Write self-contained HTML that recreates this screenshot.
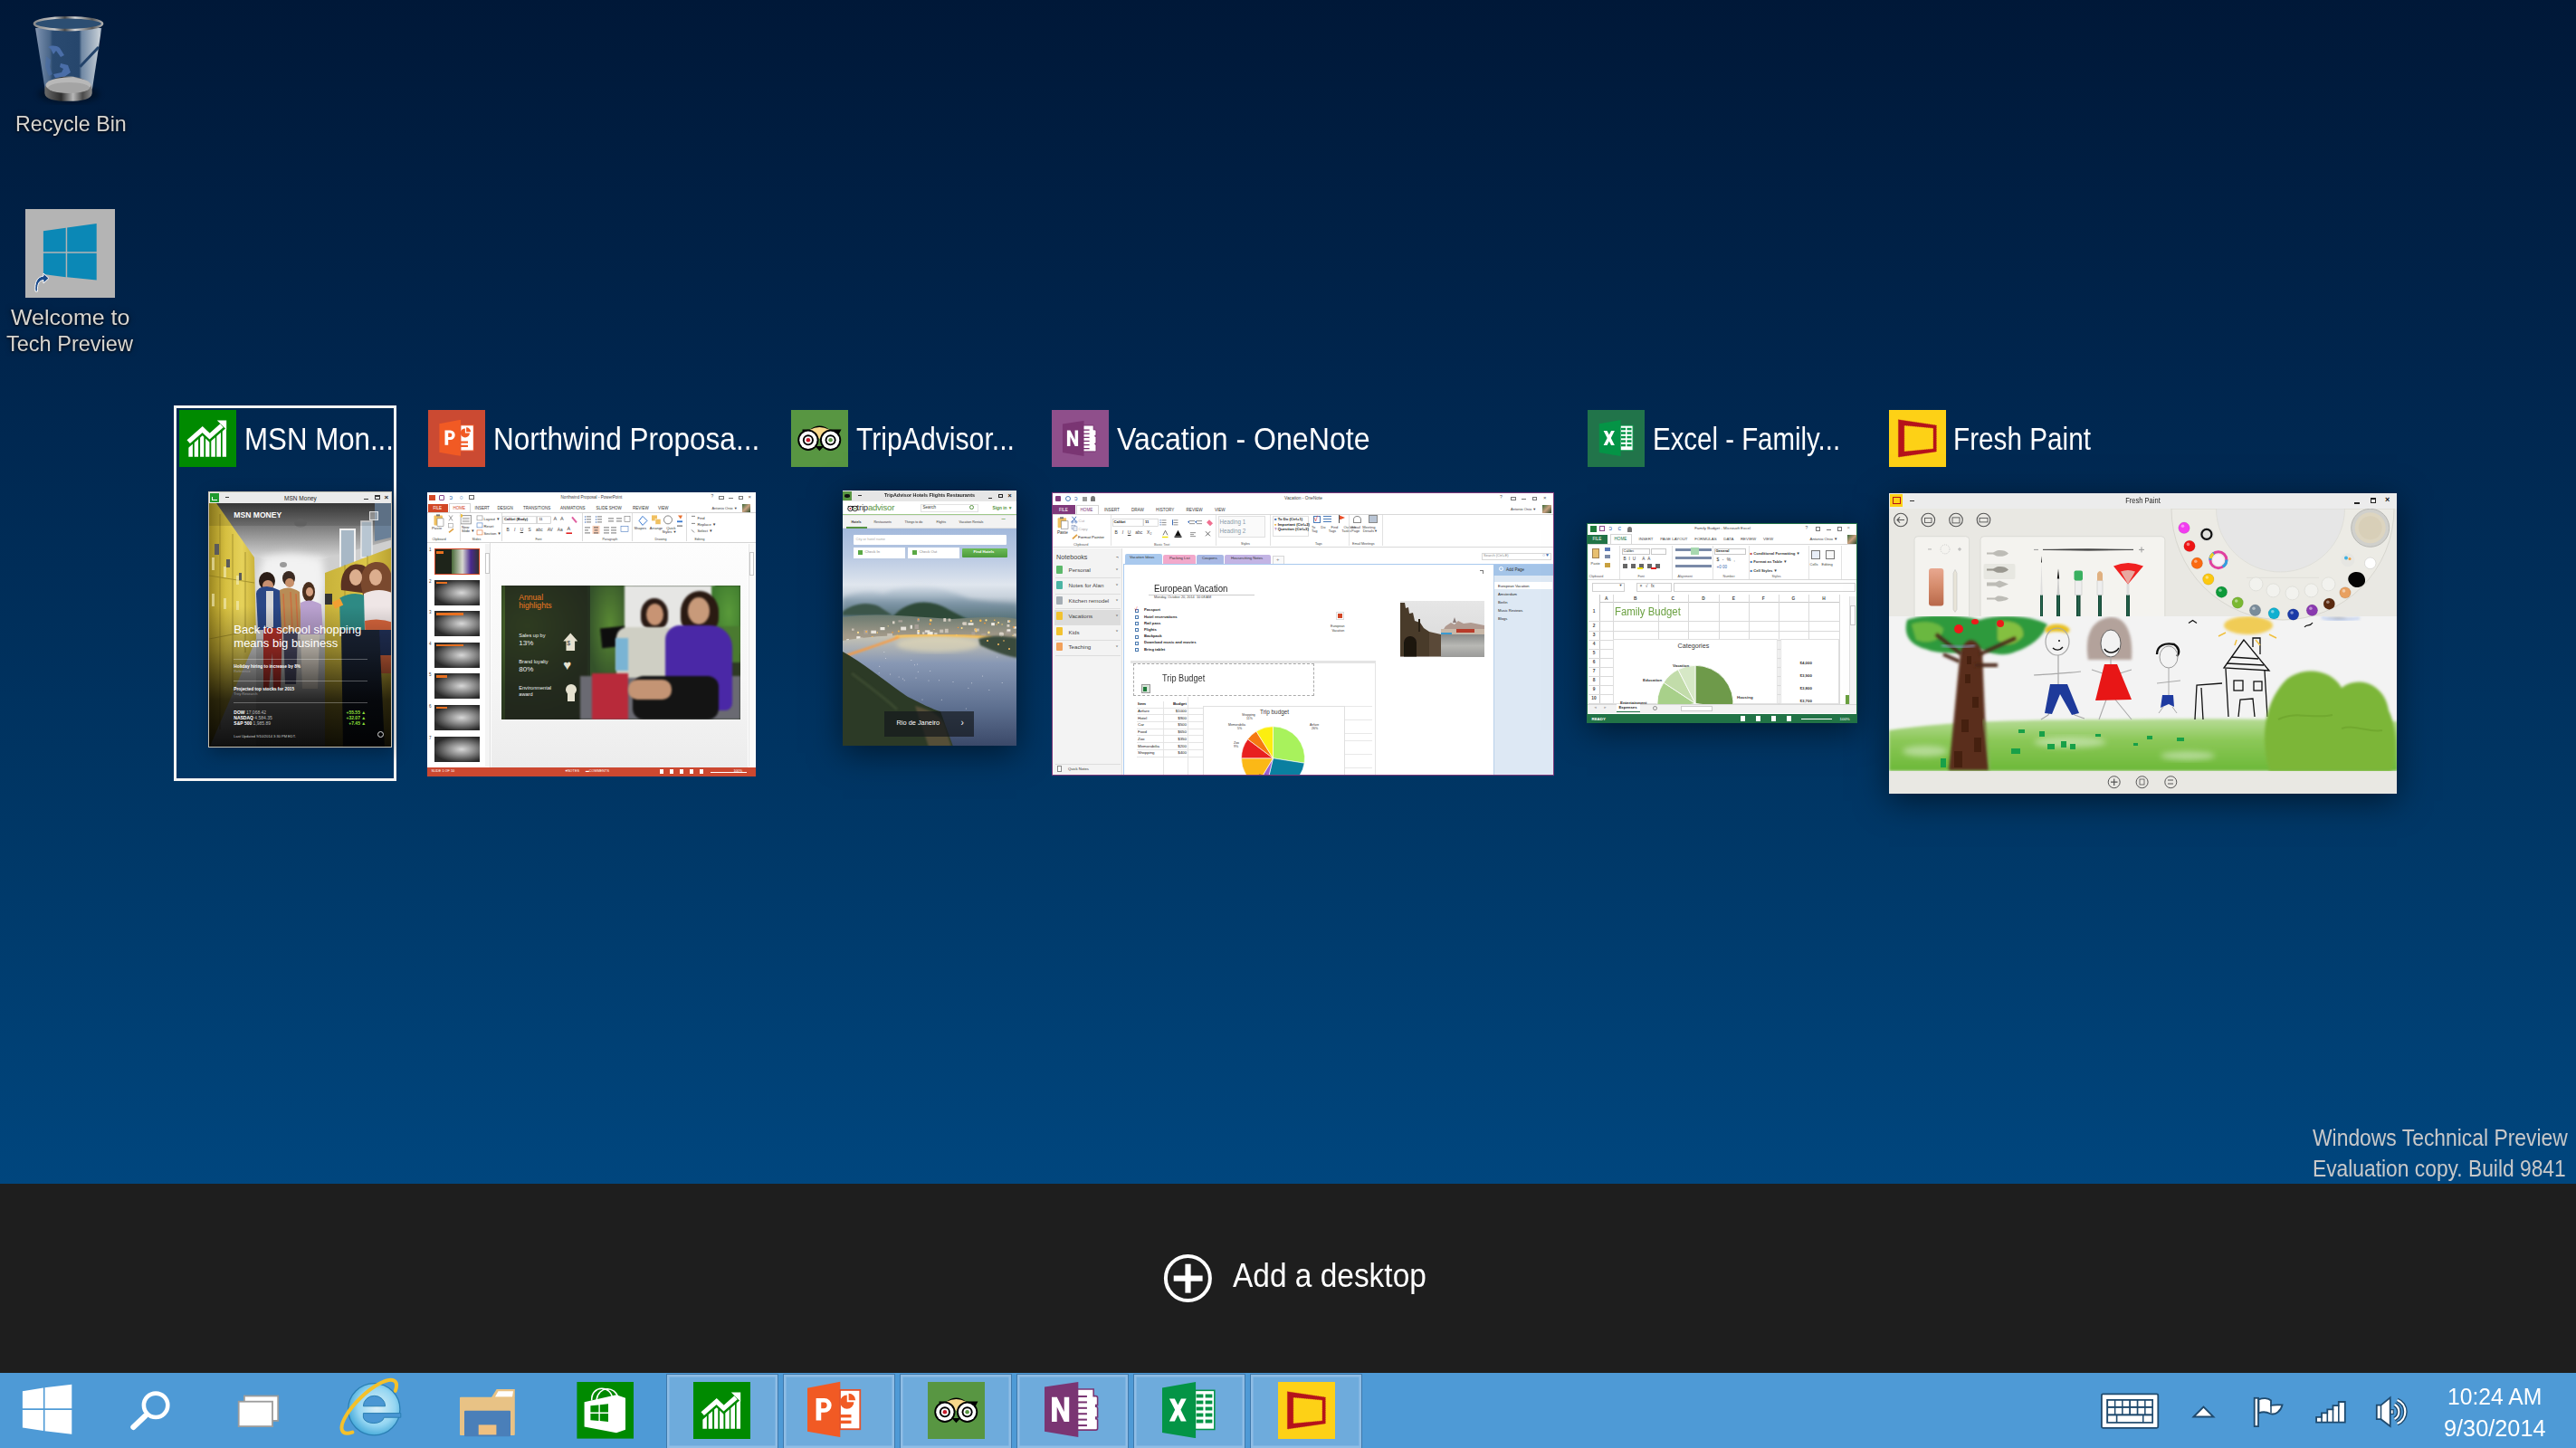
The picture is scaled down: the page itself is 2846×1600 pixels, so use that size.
<!DOCTYPE html>
<html><head><meta charset="utf-8">
<style>
*{margin:0;padding:0;box-sizing:border-box}
html,body{width:2846px;height:1600px;overflow:hidden;background:#000}
body{font-family:"Liberation Sans",sans-serif;position:relative}
.abs{position:absolute}
#bg{left:0;top:0;width:2846px;height:1308px;background:linear-gradient(180deg,#001838 0px,#00254d 400px,#003766 910px,#00467e 1308px)}
#dark{left:0;top:1308px;width:2846px;height:209px;background:#1e1e1e}
#tb{left:0;top:1517px;width:2846px;height:83px;background:#4e9ad6}
.lbl{color:#d8d5d0;font-size:24px;line-height:1;white-space:nowrap;transform-origin:0 0;text-shadow:0 1px 3px rgba(0,0,0,.8),0 0 6px rgba(0,0,0,.5)}
.hdr{color:#fff;font-size:35px;white-space:nowrap;line-height:1;transform-origin:0 0}
.ico{width:63px;height:63px}
.th{background:#fff}
.shd{box-shadow:0 8px 34px rgba(0,0,0,.5)}
.tt{white-space:nowrap;line-height:1.15}
.blur1{filter:blur(1.2px)}
.blur2{filter:blur(4px)}
.wm{color:#c9c9c9;font-size:25px;white-space:nowrap;line-height:1;transform-origin:0 0}
.clk{color:#fff;font-size:26px;white-space:nowrap;line-height:1;transform-origin:0 0}
.tbtn{top:1517.5px;width:124px;height:83px;background:#6eabdc;border:1.5px solid #3f79ac;box-shadow:inset 0 0 0 2.5px #8fbde5}
</style></head><body>
<div id="bg" class="abs"></div>

<!-- desktop icons -->
<div class="abs lbl" style="left:16.5px;top:125.4px;transform:scaleX(0.969)">Recycle Bin</div>
<svg class="abs" style="left:20px;top:10px" width="110" height="115" viewBox="20 10 110 115">
 <defs>
  <linearGradient id="rbBody" x1="0" y1="0" x2="1" y2="0"><stop offset="0" stop-color="#8898b0"/><stop offset=".08" stop-color="#6a82a2"/><stop offset=".22" stop-color="#4a6688"/><stop offset=".26" stop-color="#2a4a70"/><stop offset=".66" stop-color="#26466c"/><stop offset=".7" stop-color="#7088a4"/><stop offset=".92" stop-color="#b4c0cc"/><stop offset=".97" stop-color="#c8d0d8"/><stop offset="1" stop-color="#6a7e96"/></linearGradient>
  <linearGradient id="rbRim" x1="0" y1="0" x2="1" y2="0"><stop offset="0" stop-color="#8a8a8a"/><stop offset=".3" stop-color="#c8c8c8"/><stop offset=".45" stop-color="#4a4a4a"/><stop offset=".6" stop-color="#d8d8d8"/><stop offset=".85" stop-color="#5a5a5a"/><stop offset="1" stop-color="#b0b0b0"/></linearGradient>
  <linearGradient id="rbBase" x1="0" y1="0" x2="1" y2="0"><stop offset="0" stop-color="#6a6a6a"/><stop offset=".35" stop-color="#2e2e2e"/><stop offset=".6" stop-color="#b8b8b8"/><stop offset=".8" stop-color="#4a4a4a"/><stop offset="1" stop-color="#8a8a8a"/></linearGradient>
  <filter id="rbsh"><feGaussianBlur stdDeviation="3"/></filter>
 </defs>
 <ellipse cx="76" cy="104" rx="34" ry="10" fill="#000" opacity=".35" filter="url(#rbsh)"/>
 <path d="M39 31 L49.6 98 C58 104 94 104 102 98 L112.3 31 Z" fill="url(#rbBody)"/>
 <path d="M88.4 73.8 L109 52" stroke="#22426a" stroke-width="3"/>
 <g fill="#4a6ea8"><path d="M53 52 C57 50 62 50 66 53 L71 61 L67 63 L62 56 L59 60 L56 54 Z"/><path d="M67 70 L75 72 L78 80 L71 85 L61 86 L59 82 L68 80 L70 76 L66 74 Z"/><path d="M51 62 L56 66 L55 74 L58 82 L54 84 L50 74 Z" opacity=".6"/></g>
 <path d="M49.3 98 C50 91 60 84.5 75.5 84.5 C91 84.5 101 91 101.7 98 L101.7 103 C101 110 91 111.8 75.5 111.8 C60 111.8 50 110 49.3 103 Z" fill="url(#rbBase)"/>
 <ellipse cx="75.5" cy="94" rx="25" ry="8.5" fill="#b8b8b8"/>
 <ellipse cx="76" cy="97" rx="23" ry="6" fill="#a4a4a4"/>
 <ellipse cx="75.5" cy="26.2" rx="37.2" ry="6.6" fill="#2c4e72"/>
 <ellipse cx="75.5" cy="26.2" rx="37.6" ry="6.9" fill="none" stroke="url(#rbRim)" stroke-width="2.6"/>
</svg>
<div class="abs" style="left:28px;top:231px;width:99px;height:98px;background:#b4b4b4"></div>
<svg class="abs" style="left:28px;top:231px" width="99" height="98" viewBox="28 231 99 98">
 <path fill="#0b88b6" d="M47.9 255.3 L72.7 251.8 V278.3 H47.9 Z M74.2 251.6 L106.7 247 V278.3 H74.2 Z M47.9 279.8 H72.7 V306.2 L47.9 303 Z M74.2 279.8 H106.7 V309.5 L74.2 306.3 Z"/>
 <rect x="36" y="299" width="18" height="26" fill="#b4b4b4"/>
 <path d="M47.9 299 V303 L54 303.8 V299 Z" fill="#0b88b6"/>
 <path d="M39 322 C38 312 41 306 48 305 V302 L54 307.5 L48 313 V309.5 C43 310 41 314 41.5 322 Z" fill="#1a4a8a" stroke="#fff" stroke-width="1"/>
</svg>
<div class="abs lbl" style="left:11.8px;top:338.6px;transform:scaleX(1.04)">Welcome to</div><div class="abs lbl" style="left:7.1px;top:368.4px;transform:scaleX(0.98)">Tech Preview</div>

<!-- selection frame -->
<div class="abs" style="left:192px;top:448px;width:246px;height:415px;border:3px solid #f4f4f4"></div>

<!-- headers -->
<svg width="0" height="0" style="position:absolute">
<defs>
<symbol id="i-msn" viewBox="0 0 63 63"><rect width="63" height="63" fill="#008a00"/>
<polyline points="10.2,35.1 25.7,21.6 33.6,29.1 47,17.3" fill="none" stroke="#fff" stroke-width="5.2" stroke-linejoin="miter"/>
<polygon points="41.8,11.4 52.2,11.4 52.2,21.8" fill="#fff"/>
<clipPath id="cb"><polygon points="10.2,41.8 25.7,28.3 33.6,35.8 52.2,19.5 52.2,51.7 10.2,51.7"/></clipPath>
<g clip-path="url(#cb)" fill="#fff"><rect x="10.2" y="10" width="4.7" height="42"/><rect x="16.7" y="10" width="4.4" height="42"/><rect x="23.1" y="10" width="4.2" height="42"/><rect x="29.1" y="10" width="4.3" height="42"/><rect x="35.3" y="10" width="4.5" height="42"/><rect x="41.3" y="10" width="4.7" height="42"/><rect x="47.7" y="10" width="4.5" height="42"/></g>
</symbol>
<symbol id="d-ppt" viewBox="0 0 40 40"><polygon points="0,4.6 23.8,0 23.8,40.2 0,36" fill="#f15a24"/>
<rect x="23.6" y="6" width="14.6" height="28.4" fill="#fff" stroke="#e5532b" stroke-width="1.2"/>
<path d="M28.7 9.7 A5 5 0 1 0 33.7 14.7 L28.7 14.7 Z" fill="#f15a24"/><path d="M29.9 8.5 A5 5 0 0 1 34.9 13.5 L29.9 13.5 Z" fill="#f15a24"/>
<rect x="23.4" y="23.8" width="8.4" height="2.2" fill="#f15a24"/><rect x="23.4" y="28.1" width="8.4" height="2.2" fill="#f15a24"/>
<path fill-rule="evenodd" fill="#fff" d="M6.3 28 V11.9 H12.3 A5.2 5.2 0 0 1 12.3 22.3 H10 V28 Z M10 14.9 V19.3 H12 A2.2 2.2 0 0 0 12 14.9 Z"/></symbol>
<symbol id="i-ppt" viewBox="0 0 63 63"><rect width="63" height="63" fill="#cb4a32"/><use href="#d-ppt" x="12.2" y="10.7" width="40" height="40"/></symbol>
<symbol id="i-ta" viewBox="0 0 63 63"><rect width="63" height="63" fill="#589642"/>
<path d="M12.5 21.6 L21 21.6 Q31.5 13.2 42 21.6 L55.5 21.6 L50.5 31 L13 31 Z" fill="#000"/>
<path d="M20.8 21.8 Q31.5 16 42.2 21.8 L31.4 32 Z" fill="#f8d88b"/>
<polygon points="26.5,40 36.3,40 31.4,45.2" fill="#000"/>
<g><circle cx="18.9" cy="33.3" r="11.6" fill="#000"/><circle cx="18.9" cy="33.3" r="9.7" fill="#fff"/><circle cx="18.9" cy="33.3" r="6" fill="#000"/><circle cx="18.9" cy="33.3" r="4.1" fill="#fff"/><circle cx="18.9" cy="33.3" r="2.3" fill="#c51a2b"/></g>
<g><circle cx="43.6" cy="33.3" r="11.6" fill="#000"/><circle cx="43.6" cy="33.3" r="9.7" fill="#fff"/><circle cx="43.6" cy="33.3" r="6" fill="#000"/><circle cx="43.6" cy="33.3" r="4.1" fill="#fff"/><circle cx="43.6" cy="33.3" r="2.3" fill="#589642"/></g>
</symbol>
<symbol id="d-on" viewBox="0 0 40 40"><polygon points="0,3.5 23.7,0 23.7,39.1 0,35" fill="#7a3573"/>
<path d="M23.2 5.1 H34.4 V10 H36 A1.2 1.2 0 0 1 37.2 11.2 V16.4 H36 V17.4 A1.2 1.2 0 0 1 37.2 18.6 V25 H36 V26 A1.2 1.2 0 0 1 37.2 27.2 V32.8 A1.2 1.2 0 0 1 36 34 H23.2 Z" fill="#fff" stroke="#7a3573" stroke-width="1"/>
<g fill="#7a3573"><rect x="23" y="9.6" width="6.8" height="1.3"/><rect x="23" y="13.7" width="6.8" height="1.3"/><rect x="23" y="17.8" width="6.8" height="1.3"/><rect x="23" y="21.9" width="6.8" height="1.3"/><rect x="23" y="26" width="6.8" height="1.3"/><rect x="23" y="30.1" width="6.8" height="1.3"/></g>
<path d="M5.1 28.1 V10.7 H8.7 L13.8 21.1 V10.7 H17.3 V28.1 H13.8 L8.7 17.6 V28.1 Z" fill="#fff"/></symbol>
<symbol id="i-on" viewBox="0 0 63 63"><rect width="63" height="63" fill="#8f4f8b"/><use href="#d-on" x="11.8" y="11.9" width="40" height="40"/></symbol>
<symbol id="d-xl" viewBox="0 0 40 40"><polygon points="0,4.1 24.1,0 24.1,39.9 0,36" fill="#049446"/>
<rect x="23.7" y="6" width="13.9" height="27.7" fill="#fff" stroke="#049446" stroke-width="1"/>
<g fill="#049446"><rect x="24.5" y="8.7" width="5" height="2.5"/><rect x="31" y="8.7" width="5" height="2.5"/><rect x="24.5" y="13.2" width="5" height="2.5"/><rect x="31" y="13.2" width="5" height="2.5"/><rect x="24.5" y="17.7" width="5" height="2.5"/><rect x="31" y="17.7" width="5" height="2.5"/><rect x="24.5" y="22.2" width="5" height="2.5"/><rect x="31" y="22.2" width="5" height="2.5"/><rect x="24.5" y="26.7" width="5" height="2.5"/><rect x="31" y="26.7" width="5" height="2.5"/></g>
<path d="M5.1 11.8 H9 L11.3 16.4 L13.6 11.8 H17.4 L13.3 19.8 L17.4 27.9 H13.5 L11.3 23.3 L9 27.9 H5.1 L9.2 19.8 Z" fill="#fff"/></symbol>
<symbol id="i-xl" viewBox="0 0 63 63"><rect width="63" height="63" fill="#21744a"/><use href="#d-xl" x="12.5" y="11.1" width="40" height="40"/></symbol>
<symbol id="i-fp" viewBox="0 0 63 63"><rect width="63" height="63" fill="#fdd116"/>
<path fill-rule="evenodd" fill="#b5121b" stroke="#b5121b" stroke-width="0.6" stroke-dasharray="1.2 0.8" d="M10.4 10.8 L52.3 17 L52.3 45.9 L10.4 52 Z M16.8 17 L49 20 L49 43 L16.8 46.1 Z"/></symbol>
</defs></svg>
<svg class="abs" style="left:198px;top:453px" width="63" height="63"><use href="#i-msn"/></svg>
<div class="abs hdr" id="h1" style="left:269.9px;top:467.4px;transform:scaleX(0.893)">MSN Mon...</div>
<svg class="abs" style="left:473px;top:453px" width="63" height="63"><use href="#i-ppt"/></svg>
<div class="abs hdr" id="h2" style="left:545px;top:467.4px;transform:scaleX(0.900)">Northwind Proposa...</div>
<svg class="abs" style="left:874px;top:453px" width="63" height="63"><use href="#i-ta"/></svg>
<div class="abs hdr" id="h3" style="left:946.1px;top:467.4px;transform:scaleX(0.862)">TripAdvisor...</div>
<svg class="abs" style="left:1162px;top:453px" width="63" height="63"><use href="#i-on"/></svg>
<div class="abs hdr" id="h4" style="left:1234.4px;top:467.4px;transform:scaleX(0.917)">Vacation - OneNote</div>
<svg class="abs" style="left:1754px;top:453px" width="63" height="63"><use href="#i-xl"/></svg>
<div class="abs hdr" id="h5" style="left:1826.2px;top:467.4px;transform:scaleX(0.841)">Excel - Family...</div>
<svg class="abs" style="left:2087px;top:453px" width="63" height="63"><use href="#i-fp"/></svg>
<div class="abs hdr" id="h6" style="left:2158px;top:467.4px;transform:scaleX(0.849)">Fresh Paint</div>

<!-- thumbnails -->
<!-- MSN thumb -->
<div class="abs th" style="left:229.5px;top:543px;width:203.2px;height:283px;overflow:hidden;background:#eaeaea;border:1px solid #c8c0b0;box-shadow:2px 6px 18px rgba(0,0,0,.3)">
 <div class="abs" style="left:1.5px;top:0.8px;width:10px;height:10px;background:#1f9a2e"></div>
 <div class="abs" style="left:3.5px;top:5px;width:6px;height:4px;border-left:1px solid #fff;border-bottom:1px solid #fff"></div>
 <div class="abs" style="left:18px;top:5px;width:4px;height:1.3px;background:#333"></div>
 <div class="abs tt" style="left:0;width:203px;top:2.5px;text-align:center;font-size:6.5px;color:#222">MSN Money</div>
 <div class="abs" style="left:171px;top:7px;width:5px;height:1.3px;background:#333"></div>
 <div class="abs" style="left:183px;top:3px;width:6px;height:5px;border:1px solid #333;border-top-width:2px"></div>
 <div class="abs tt" style="left:194px;top:1px;font-size:8px;color:#222;font-weight:bold">×</div>
 <div class="abs" style="left:0;top:12px;width:203.2px;height:271px;overflow:hidden;background:#d8d8d8">
  <svg class="abs" style="left:0;top:0" width="204" height="271" viewBox="0 0 204 271">
   <defs>
    <linearGradient id="mceil" x1="0" y1="0" x2="0" y2="1"><stop offset="0" stop-color="#3e3e3e"/><stop offset=".5" stop-color="#8a8a8a"/><stop offset="1" stop-color="#d8d8d8"/></linearGradient>
    <radialGradient id="mlight" cx=".5" cy=".5" r=".5"><stop offset="0" stop-color="#ffffff"/><stop offset=".6" stop-color="#f4f4f4"/><stop offset="1" stop-color="#e0e0e0" stop-opacity="0"/></radialGradient>
    <linearGradient id="mlock" x1="0" y1="0" x2="1" y2="0"><stop offset="0" stop-color="#9a8620"/><stop offset=".35" stop-color="#d6bf40"/><stop offset=".7" stop-color="#e6d25a"/><stop offset="1" stop-color="#c8b038"/></linearGradient>
    <linearGradient id="mlockr" x1="0" y1="0" x2="1" y2="0"><stop offset="0" stop-color="#c8b23a"/><stop offset=".6" stop-color="#dcc648"/><stop offset="1" stop-color="#b8a030"/></linearGradient>
    <linearGradient id="mdark" x1="0" y1="0" x2="0" y2="1"><stop offset="0" stop-color="#000" stop-opacity="0"/><stop offset=".42" stop-color="#000" stop-opacity="0"/><stop offset=".6" stop-color="#000" stop-opacity=".3"/><stop offset=".8" stop-color="#000" stop-opacity=".78"/><stop offset="1" stop-color="#000" stop-opacity=".93"/></linearGradient>
    <filter id="mb1"><feGaussianBlur stdDeviation=".7"/></filter><filter id="mb3"><feGaussianBlur stdDeviation="4"/></filter>
   </defs>
   <rect x="0" y="0" width="204" height="271" fill="#cfcfcf"/>
   <path d="M0 0 H204 V40 L125 62 H60 L0 30 Z" fill="url(#mceil)"/>
   <ellipse cx="90" cy="85" rx="45" ry="35" fill="url(#mlight)" filter="url(#mb3)"/>
   <rect x="60" y="60" width="65" height="70" fill="#f2f2f2" filter="url(#mb3)"/>
   <ellipse cx="101" cy="22" rx="7" ry="4.5" fill="#6e6e6e"/>
   <ellipse cx="82" cy="68" rx="4" ry="3" fill="#9a9a9a"/>
   <path d="M0 0 H8 L50 60 L52 150 L0 271 Z" fill="url(#mlock)"/>
   <g stroke="#7a6a18" stroke-width="1" opacity=".55"><path d="M12 12 V250 M26 34 V205 M40 54 V165"/><path d="M0 80 L50 88 M0 150 L52 140"/></g>
   <g fill="#f6f0c0" opacity=".6"><rect x="3" y="60" width="3" height="14"/><rect x="16" y="70" width="3" height="12"/><rect x="30" y="80" width="3" height="10"/><rect x="3" y="100" width="3" height="14"/><rect x="16" y="105" width="3" height="12"/><rect x="30" y="108" width="3" height="10"/></g>
   <g fill="#5a5a5a"><rect x="6" y="45" width="5" height="12"/><rect x="19" y="62" width="4" height="9"/><rect x="33" y="77" width="3" height="8"/></g>
   <rect x="145" y="29" width="16" height="51" fill="#a8b8c6" stroke="#f0f0f0" stroke-width="2"/>
   <rect x="168" y="20" width="12" height="40" fill="#b8c6d2" stroke="#eaeaea" stroke-width="1.5"/>
   <path d="M183 0 H204 V37 L183 42 Z" fill="#6a8098"/>
   <path d="M128 77 L204 48 V271 H128 Z" fill="url(#mlockr)"/>
   <g stroke="#7a6a18" stroke-width="1" opacity=".5"><path d="M150 68 V230 M175 58 V240"/></g>
   <rect x="128" y="100" width="8" height="12" fill="#333"/>
   <path d="M52 150 L128 150 L128 271 L52 271 Z" fill="#b8b8b8"/>
   <g filter="url(#mb1)">
    <ellipse cx="64" cy="86" rx="9" ry="10" fill="#2a1c14"/>
    <ellipse cx="65" cy="91" rx="6" ry="6" fill="#c89070"/>
    <path d="M52 100 Q53 92 64 92 Q78 93 84 104 L86 140 H54 Z" fill="#2c4686"/>
    <rect x="63" y="97" width="8" height="40" fill="#d8d8d8"/>
    <path d="M60 138 H81 L79 205 H71 L70 165 L66 205 H60 Z" fill="#b8302a"/>
    <ellipse cx="88" cy="83" rx="7" ry="8" fill="#3a2a20"/>
    <ellipse cx="89" cy="88" rx="5" ry="5" fill="#c8906a"/>
    <path d="M78 96 Q88 90 100 98 L102 142 H80 Z" fill="#b88c56"/>
    <path d="M82 100 L84 140 M90 98 L92 140 M96 100 L98 140" stroke="#d85a30" stroke-width="1.5" opacity=".6"/>
    <path d="M82 142 H98 L96 200 H84 Z" fill="#4a4a62"/>
    <ellipse cx="110" cy="98" rx="7" ry="11" fill="#4a2e1e"/>
    <ellipse cx="111" cy="98" rx="4" ry="5" fill="#d4a080"/>
    <path d="M101 110 Q111 104 124 112 L126 145 H101 Z" fill="#baa2d0"/>
    <path d="M101 145 H122 L120 205 H103 Z" fill="#e4dcd0"/>
    <path d="M146 96 C144 75 155 65 168 68 C178 70 180 85 176 100 Z" fill="#5a3220"/>
    <path d="M168 92 C166 70 178 62 192 66 C204 72 204 90 200 110 H172 Z" fill="#7a4a2e"/>
    <ellipse cx="162" cy="82" rx="7" ry="9" fill="#dcae8e"/>
    <ellipse cx="184" cy="82" rx="7" ry="9" fill="#dcae8e"/>
    <path d="M144 105 Q158 97 172 102 L174 142 H145 Z" fill="#2e8a84"/>
    <path d="M171 100 Q188 92 204 100 V140 H172 Z" fill="#efe6e6"/>
    <rect x="137" y="107" width="10" height="8" fill="#f2a030" transform="rotate(-25 142 111)"/>
    <path d="M172 130 Q188 126 204 132 V188 H174 Z" fill="#d9663e"/>
    <path d="M177 140 H202 V168 H178 Z" fill="#23305a"/>
    <path d="M146 140 H188 L194 271 H148 Z" fill="#1d2638"/>
   </g>
   <rect x="0" y="0" width="204" height="271" fill="url(#mdark)"/>
   <rect x="0" y="0" width="204" height="25" fill="#000" opacity=".12"/>
  </svg>
  <!-- text -->
  <div class="abs tt" style="left:27.8px;top:9px;font-size:8.6px;font-weight:bold;color:#fff">MSN MONEY</div>
  <div class="abs" style="left:177px;top:8.5px;width:10px;height:10px;background:rgba(255,255,255,.35);border:1px solid rgba(255,255,255,.7)"></div>
  <div class="abs tt" style="left:27.8px;top:131.5px;font-size:13px;color:#fff;line-height:15px;transform-origin:0 0">Back to school shopping<br>means big business</div>
  <div class="abs" style="left:27.8px;top:172px;width:148px;height:.6px;background:rgba(255,255,255,.3)"></div>
  <div class="abs tt" style="left:27.8px;top:178px;font-size:4.8px;font-weight:bold;color:#fff">Holiday hiring to increase by 8%</div>
  <div class="abs tt" style="left:27.8px;top:184px;font-size:4px;color:#999">Reference</div>
  <div class="abs" style="left:27.8px;top:196px;width:148px;height:.6px;background:rgba(255,255,255,.3)"></div>
  <div class="abs tt" style="left:27.8px;top:203px;font-size:4.8px;font-weight:bold;color:#fff">Projected top stocks for 2015</div>
  <div class="abs tt" style="left:27.8px;top:209px;font-size:4px;color:#999">Trey Research</div>
  <div class="abs" style="left:27.8px;top:220px;width:148px;height:.6px;background:rgba(255,255,255,.3)"></div>
  <div class="abs tt" style="left:27.8px;top:228px;font-size:5px;font-weight:bold;color:#fff;line-height:6px">DOW <span style="font-weight:normal;color:#bbb">17,068.42</span><br>NASDAQ <span style="font-weight:normal;color:#bbb">4,584.35</span><br>S&amp;P 500 <span style="font-weight:normal;color:#bbb">1,985.89</span></div>
  <div class="abs tt" style="left:152px;top:228px;font-size:5px;font-weight:bold;color:#8ee03a;line-height:6px;text-align:right">+55.55 ▲<br>+32.07 ▲<br>+7.45 ▲</div>
  <div class="abs" style="left:186px;top:252px;width:7px;height:7px;border:1px solid #ddd;border-radius:50%"></div>
  <div class="abs tt" style="left:27.8px;top:256px;font-size:4px;color:#ccc">Last Updated 9/10/2014 3:30 PM EDT.</div>
 </div>
</div>
<!-- PPT thumb -->
<div class="abs th" style="left:472.4px;top:544px;width:362.6px;height:313.5px;overflow:hidden;background:#fff">
 <div class="abs" style="left:2px;top:3px;width:7px;height:6px;background:#d24726"></div>
 <div class="abs" style="left:13px;top:3px;width:6px;height:6px;border:1.2px solid #8a4a8a;border-radius:1px"></div>
 <div class="abs tt" style="left:24px;top:1.5px;font-size:7px;color:#2a6ab0">ↄ</div><div class="abs tt" style="left:35px;top:1.5px;font-size:7px;color:#2a6ab0">○</div>
 <div class="abs" style="left:46px;top:3px;width:6px;height:5px;border:1px solid #666"></div>
 <div class="abs tt" style="left:0;width:362px;text-align:center;top:2.8px;font-size:4.6px;color:#444">Northwind Proposal - PowerPoint</div>
 <div class="abs tt" style="left:313px;top:2px;font-size:5px;color:#555">?</div>
 <div class="abs" style="left:322px;top:3.5px;width:5.5px;height:4.5px;border:1px solid #777"></div>
 <div class="abs" style="left:333px;top:6px;width:5px;height:1px;background:#777"></div>
 <div class="abs" style="left:344px;top:3.5px;width:5px;height:4.5px;border:1px solid #777"></div>
 <div class="abs tt" style="left:354px;top:1.5px;font-size:6px;color:#555">×</div>
 <div class="abs" style="left:0.5px;top:12.7px;width:22px;height:8.9px;background:#d24726"></div>
 <div class="abs tt" style="left:6px;top:14.8px;font-size:4.6px;color:#fff">FILE</div>
 <div class="abs" style="left:23.4px;top:12.2px;width:24px;height:9.8px;border:1px solid #d5d5d5;border-bottom:none;background:#fff"></div>
 <div class="abs tt" style="left:28px;top:15px;font-size:4.6px;color:#d24726">HOME</div>
 <div class="abs tt" style="left:52px;top:15px;font-size:4.5px;color:#333">INSERT</div><div class="abs tt" style="left:77px;top:15px;font-size:4.5px;color:#333">DESIGN</div><div class="abs tt" style="left:105.5px;top:15px;font-size:4.5px;color:#333">TRANSITIONS</div><div class="abs tt" style="left:146.5px;top:15px;font-size:4.5px;color:#333">ANIMATIONS</div><div class="abs tt" style="left:186px;top:15px;font-size:4.5px;color:#333">SLIDE SHOW</div><div class="abs tt" style="left:226.5px;top:15px;font-size:4.5px;color:#333">REVIEW</div><div class="abs tt" style="left:254.5px;top:15px;font-size:4.5px;color:#333">VIEW</div>
 <div class="abs tt" style="left:314px;top:15.5px;font-size:4px;color:#444">Antonio Onio ▼</div>
 <div class="abs" style="left:348px;top:12.5px;width:9px;height:9px;background:linear-gradient(135deg,#3a6a3a,#c8a080 50%,#2a4a2a)"></div>
 <div class="abs" style="left:0;top:21.6px;width:362.6px;height:34.5px;background:#fff;border-top:1px solid #d5d5d5;border-bottom:1px solid #d5d5d5"></div>
 <!-- ribbon groups (approx icons) -->
 <svg class="abs" style="left:0;top:21.6px" width="362" height="35" viewBox="0 21.6 362 35">
  <rect x="7.5" y="25" width="9.5" height="11" rx="1" fill="#f0c060"/><rect x="11" y="28.5" width="7" height="8.5" fill="#fff" stroke="#666" stroke-width=".5"/><rect x="10" y="24" width="4" height="2" fill="#777"/>
  <path d="M24 25 L28 31 M28 25 L24 31" stroke="#888" stroke-width=".8"/><rect x="23.5" y="34" width="5" height="4.5" fill="none" stroke="#999" stroke-width=".6"/><path d="M24 44 L29 40" stroke="#e0a040" stroke-width="1.6"/>
  <rect x="37" y="25" width="11.5" height="9.5" fill="#f4f4f4" stroke="#777" stroke-width=".7"/><rect x="39" y="28" width="7.5" height="1.2" fill="#aaa"/><rect x="39" y="31" width="7.5" height="1.2" fill="#aaa"/><circle cx="37.5" cy="25.5" r="1.8" fill="#f0c040"/>
  <rect x="55" y="25.5" width="6" height="5" fill="#fff" stroke="#888" stroke-width=".6"/><rect x="55" y="33.5" width="6" height="5" fill="#fff" stroke="#4a7ac0" stroke-width=".6"/><rect x="55" y="41.5" width="6" height="5" fill="#fff" stroke="#e07030" stroke-width=".6"/>
  <rect x="83.5" y="26.4" width="37.3" height="7.6" fill="#fff" stroke="#bbb" stroke-width=".6"/><rect x="121.5" y="26.4" width="15" height="7.6" fill="#fff" stroke="#bbb" stroke-width=".6"/>
  <path d="M160 27 L165 33" stroke="#e060a0" stroke-width="2"/>
  <rect x="153.5" y="44" width="6.5" height="1.6" fill="#e02020"/>
  <g fill="#3a6ab8"><rect x="174" y="26" width="1.2" height="1.2"/><rect x="174" y="29" width="1.2" height="1.2"/><rect x="174" y="32" width="1.2" height="1.2"/><rect x="186" y="26" width="1.2" height="1.2"/><rect x="186" y="29" width="1.2" height="1.2"/><rect x="186" y="32" width="1.2" height="1.2"/></g>
  <g fill="#777"><rect x="176" y="26" width="5" height="1"/><rect x="176" y="29" width="5" height="1"/><rect x="176" y="32" width="5" height="1"/><rect x="188" y="26" width="5" height="1"/><rect x="188" y="29" width="5" height="1"/><rect x="188" y="32" width="5" height="1"/>
  <rect x="200" y="28" width="6" height="1"/><rect x="200" y="31" width="6" height="1"/><rect x="209" y="28" width="6" height="1"/><rect x="209" y="31" width="6" height="1"/>
  <rect x="174" y="38" width="6" height="1"/><rect x="174" y="41" width="4" height="1"/><rect x="174" y="44" width="6" height="1"/><rect x="195" y="38" width="6" height="1"/><rect x="195" y="41" width="6" height="1"/><rect x="195" y="44" width="6" height="1"/><rect x="203" y="38" width="6" height="1"/><rect x="203" y="41" width="6" height="1"/><rect x="203" y="44" width="6" height="1"/></g>
  <rect x="182.5" y="36.5" width="8" height="9" fill="#fbd0b8"/><g fill="#555"><rect x="184" y="38" width="5" height="1"/><rect x="184.5" y="41" width="4" height="1"/><rect x="184" y="44" width="5" height="1"/></g>
  <rect x="214" y="37" width="8" height="6" fill="none" stroke="#4a7ac0" stroke-width=".6"/>
  <g fill="#4a7ac0"><rect x="218" y="26" width="6" height="6" fill="none" stroke="#777" stroke-width=".6"/></g>
  <path d="M234 31 L238 26 L243 31 L238 36 Z" fill="none" stroke="#3a7ad0" stroke-width="1"/>
  <rect x="248" y="25" width="6" height="6" fill="#f0c060"/><rect x="252" y="29" width="6" height="6" fill="#f0c060" stroke="#fff" stroke-width=".5"/>
  <circle cx="266" cy="30" r="4.5" fill="none" stroke="#666" stroke-width=".8"/>
  <path d="M277 25 L282 25 L280 29 Z" fill="#e87030"/><rect x="276" y="31" width="6" height="1.8" fill="#3a7ad0"/><rect x="276" y="36" width="6" height="1.5" fill="#888"/>
  <path d="M292 26 H296 M292 34 H296 M292 41 L295 44" stroke="#666" stroke-width=".8"/>
 </svg>
 <div class="abs tt" style="left:4.5px;top:36.5px;font-size:4.4px;color:#333">Paste</div>
 <div class="abs tt" style="left:37.5px;top:36.5px;font-size:4.2px;color:#333;line-height:4.6px">New<br>Slide ▼</div>
 <div class="abs tt" style="left:62px;top:25.5px;font-size:4.2px;color:#333;line-height:8px">Layout ▼<br>Reset<br>Section ▼</div>
 <div class="abs tt" style="left:84.5px;top:27.8px;font-size:4px;font-weight:bold;color:#222">Calibri (Body)</div>
 <div class="abs tt" style="left:123px;top:27.8px;font-size:4px;color:#222">11</div>
 <div class="abs tt" style="left:139px;top:26px;font-size:5.5px;color:#444;word-spacing:3px">A A</div>
 <div class="abs tt" style="left:87px;top:38.5px;font-size:4.8px;color:#444;word-spacing:4px">B <i>I</i> <u>U</u> S abc AV Aa</div>
 <div class="abs tt" style="left:154px;top:37px;font-size:5.5px;color:#333">A</div>
 <div class="abs tt" style="left:228px;top:37.5px;font-size:4px;color:#333;word-spacing:3px">Shapes Arrange Quick</div>
 <div class="abs tt" style="left:259px;top:42px;font-size:4px;color:#333">Styles ▼</div>
 <div class="abs tt" style="left:298px;top:24.5px;font-size:4.2px;color:#333;line-height:7.4px">Find<br>Replace ▼<br>Select ▼</div>
 <div class="abs" style="left:36px;top:23px;width:0.6px;height:31px;background:#ddd"></div>
 <div class="abs" style="left:82px;top:23px;width:0.6px;height:31px;background:#ddd"></div>
 <div class="abs" style="left:171px;top:23px;width:0.6px;height:31px;background:#ddd"></div>
 <div class="abs" style="left:226px;top:23px;width:0.6px;height:31px;background:#ddd"></div>
 <div class="abs" style="left:286px;top:23px;width:0.6px;height:31px;background:#ddd"></div>
 <div class="abs tt" style="left:5px;top:50px;font-size:3.6px;color:#444">Clipboard</div>
 <div class="abs tt" style="left:49px;top:50px;font-size:3.6px;color:#444">Slides</div>
 <div class="abs tt" style="left:119px;top:50px;font-size:3.6px;color:#444">Font</div>
 <div class="abs tt" style="left:193px;top:50px;font-size:3.6px;color:#444">Paragraph</div>
 <div class="abs tt" style="left:251px;top:50px;font-size:3.6px;color:#444">Drawing</div>
 <div class="abs tt" style="left:295px;top:50px;font-size:3.6px;color:#444">Editing</div>
 <!-- slide pane -->
 <div class="abs" style="left:0;top:56px;width:70px;height:248px;background:#fff;border-right:1px solid #e0e0e0"></div>
 <div class="abs" style="left:63.5px;top:57px;width:5.5px;height:246px;background:#f4f4f4"></div>
 <div class="abs" style="left:64px;top:67px;width:4.5px;height:23px;background:#fff;border:1px solid #c8c8c8"></div>
 <div class="abs tt" style="left:1.5px;top:61px;font-size:4.5px;color:#333">1</div><div class="abs" style="left:7.3px;top:61.5px;width:50.5px;height:29px;border:1px solid #d24726;background:#1e241a"></div><div class="abs" style="left:27px;top:63px;width:30px;height:27px;background:linear-gradient(90deg,#4a6a3a,#d8d8d0 40%,#4a2a90 70%,#333)"></div><div class="abs" style="left:10px;top:65px;width:8px;height:3px;background:#e87020"></div><div class="abs tt" style="left:1.5px;top:95.5px;font-size:4.5px;color:#333">2</div><div class="abs" style="left:8px;top:96.5px;width:49.5px;height:28px;background:radial-gradient(ellipse at 60% 50%,#d8d8d8 0,#8a8a8a 35%,#2a2a2a 75%)"></div><div class="abs" style="left:10px;top:98.5px;width:12px;height:2.5px;background:#e87020"></div><div class="abs tt" style="left:1.5px;top:130px;font-size:4.5px;color:#333">3</div><div class="abs" style="left:8px;top:131px;width:49.5px;height:28px;background:radial-gradient(ellipse at 60% 50%,#d8d8d8 0,#8a8a8a 35%,#2a2a2a 75%)"></div><div class="abs" style="left:10px;top:133px;width:30px;height:2.5px;background:#e87020"></div><div class="abs tt" style="left:1.5px;top:164.7px;font-size:4.5px;color:#333">4</div><div class="abs" style="left:8px;top:165.7px;width:49.5px;height:28px;background:radial-gradient(ellipse at 60% 50%,#d8d8d8 0,#8a8a8a 35%,#2a2a2a 75%)"></div><div class="abs" style="left:10px;top:167.7px;width:30px;height:2.5px;background:#e87020"></div><div class="abs tt" style="left:1.5px;top:199px;font-size:4.5px;color:#333">5</div><div class="abs" style="left:8px;top:200px;width:49.5px;height:28px;background:radial-gradient(ellipse at 60% 50%,#d8d8d8 0,#8a8a8a 35%,#2a2a2a 75%)"></div><div class="abs" style="left:10px;top:202px;width:12px;height:2.5px;background:#e87020"></div><div class="abs tt" style="left:1.5px;top:233.6px;font-size:4.5px;color:#333">6</div><div class="abs" style="left:8px;top:234.6px;width:49.5px;height:28px;background:radial-gradient(ellipse at 60% 50%,#d8d8d8 0,#8a8a8a 35%,#2a2a2a 75%)"></div><div class="abs" style="left:10px;top:236.6px;width:12px;height:2.5px;background:#e87020"></div><div class="abs tt" style="left:1.5px;top:268.5px;font-size:4.5px;color:#333">7</div><div class="abs" style="left:8px;top:269.5px;width:49.5px;height:28px;background:radial-gradient(ellipse at 60% 50%,#d8d8d8 0,#8a8a8a 35%,#2a2a2a 75%)"></div>
 <!-- main area -->
 <div class="abs" style="left:71px;top:56px;width:283px;height:248px;background:linear-gradient(180deg,#fdfdfd 0,#f6f6f6 60%,#ececec 100%)"></div>
 <div class="abs" style="left:354.7px;top:57px;width:7px;height:246px;background:#fafafa;border-left:1px solid #e6e6e6"></div>
 <div class="abs" style="left:356px;top:66px;width:5px;height:26px;background:#fff;border:1px solid #c8c8c8"></div>
 <!-- slide -->
 <div class="abs" style="left:81.9px;top:103.4px;width:263.5px;height:148px;overflow:hidden;background:#2e3a24">
  <div class="abs blur1" style="left:0;top:0;width:140px;height:148px;background:radial-gradient(ellipse at 20% 30%,#4a6a2a 0,#2e4022 50%,#222a1a 100%)"></div>
  <div class="abs blur1" style="left:95px;top:0;width:50px;height:110px;background:radial-gradient(ellipse at 50% 40%,#5a8a34 0,#34522a 70%)"></div>
  <div class="abs" style="left:4px;top:0;width:94px;height:148px;background:rgba(28,28,26,.6)"></div>
  <div class="abs blur1" style="left:136px;top:0;width:100px;height:50px;background:#e6e6e4"></div>
  <div class="abs blur1" style="left:232px;top:0;width:32px;height:75px;background:radial-gradient(ellipse at 60% 40%,#5a9a3a 0,#3e7a2e 70%)"></div>
  <div class="abs blur1" style="left:222px;top:45px;width:42px;height:40px;background:#4a7a30"></div>
  <div class="abs blur1" style="left:87px;top:100px;width:177px;height:48px;background:#6a6a72"></div>
  <div class="abs blur1" style="left:110px;top:46px;width:27px;height:22px;background:#0e0e0e;transform:rotate(-6deg)"></div>
  <div class="abs blur1" style="left:154px;top:14px;width:30px;height:34px;border-radius:50% 50% 35% 35%;background:#2a1a14"></div>
  <div class="abs blur1" style="left:160px;top:20px;width:19px;height:24px;border-radius:50%;background:#c89474"></div>
  <div class="abs blur1" style="left:127px;top:46px;width:68px;height:56px;border-radius:12px 14px 4px 4px;background:#cfcfc4"></div>
  <div class="abs blur1" style="left:126px;top:58px;width:14px;height:36px;background:#7ab4d4"></div>
  <div class="abs blur1" style="left:100px;top:97px;width:40px;height:51px;background:#b82a3a"></div>
  <div class="abs blur1" style="left:198px;top:6px;width:42px;height:46px;border-radius:50% 50% 35% 35%;background:#2a1a12"></div>
  <div class="abs blur1" style="left:206px;top:13px;width:24px;height:30px;border-radius:50%;background:#c89a7a"></div>
  <div class="abs blur1" style="left:181px;top:44px;width:74px;height:94px;border-radius:16px 24px 8px 8px;background:#4a28a6"></div>
  <div class="abs blur1" style="left:145px;top:100px;width:95px;height:48px;border-radius:12px;background:#141414"></div>
  <div class="abs blur1" style="left:140px;top:104px;width:48px;height:22px;border-radius:10px;background:#c49474"></div>
  <div class="abs tt" style="left:19px;top:9px;font-size:8.6px;color:#f07a22;line-height:9px">Annual<br>highlights</div>
  <div class="abs tt" style="left:19px;top:52px;font-size:5.6px;color:#eee;line-height:7.5px">Sales up by<br><span style="font-size:8px">13%</span></div>
  <div class="abs tt" style="left:19px;top:81px;font-size:5.6px;color:#eee;line-height:7.5px">Brand loyalty<br><span style="font-size:8px">80%</span></div>
  <div class="abs tt" style="left:19px;top:110px;font-size:5.6px;color:#eee;line-height:7px">Environmental<br>award</div>
  <div class="abs" style="left:68px;top:52px;width:16px;height:20px;background:#e6e2d0;clip-path:polygon(50% 0,100% 45%,80% 45%,80% 100%,20% 100%,20% 45%,0 45%)"></div>
  <div class="abs tt" style="left:72px;top:60px;font-size:7px;color:#3a3a3a">$</div>
  <div class="abs tt" style="left:68px;top:80px;font-size:15px;color:#e6e2d0;line-height:1">♥</div>
  <div class="abs" style="left:71px;top:109px;width:12px;height:12px;border-radius:50%;background:#e6e2d0"></div>
  <div class="abs" style="left:73px;top:120px;width:8px;height:8px;background:#e6e2d0"></div>
 </div>
 <div class="abs" style="left:0;top:304px;width:362.6px;height:9.5px;background:#cc4830"></div>
 <div class="abs tt" style="left:4px;top:306px;font-size:3.8px;color:#fff">SLIDE 1 OF 10</div>
 <div class="abs tt" style="left:152px;top:306px;font-size:3.8px;color:#fff;word-spacing:6px">♣NOTES ▬COMMENTS</div>
 <div class="abs" style="left:257px;top:306px;width:50px;height:5px;background:repeating-linear-gradient(90deg,#fff 0 4px,transparent 4px 11px)"></div>
 <div class="abs" style="left:313px;top:308.5px;width:40px;height:0.8px;background:#fff"></div>
 <div class="abs tt" style="left:338px;top:306px;font-size:3.8px;color:#fff">100%</div>
</div>
<!-- TA thumb -->
<div class="abs th shd" style="left:930.5px;top:542px;width:192.5px;height:282.2px;overflow:hidden;background:#e6e6e6">
 <div class="abs" style="left:0.6px;top:0.8px;width:9.8px;height:9.8px;background:#589642"></div>
 <div class="abs" style="left:2.2px;top:4px;width:6.5px;height:3.5px;border-radius:40%;background:#111"></div>
 <div class="abs" style="left:17px;top:5.3px;width:4px;height:1.2px;background:#333"></div>
 <div class="abs tt" style="left:0;width:192px;text-align:center;top:2.3px;font-size:6px;font-weight:bold;color:#222;transform:scaleX(.9)">TripAdvisor Hotels Flights Restaurants</div>
 <div class="abs" style="left:161px;top:7.5px;width:4.5px;height:1.3px;background:#222"></div>
 <div class="abs" style="left:172px;top:3.5px;width:5.5px;height:4.5px;border:1px solid #222;border-top-width:1.6px"></div>
 <div class="abs tt" style="left:183px;top:1.5px;font-size:7px;font-weight:bold;color:#111">×</div>
 <div class="abs" style="left:0;top:11.9px;width:192.5px;height:15.2px;background:#fff;border-bottom:1px solid #9fc98a"></div>
 <svg class="abs" style="left:5px;top:14px" width="12" height="10" viewBox="0 0 12 10"><path d="M0.5 3 H11.5 L10.5 4.5 L1.5 4.5 Z" fill="#222"/><circle cx="3.4" cy="6" r="2.7" fill="#fff" stroke="#222" stroke-width="1"/><circle cx="8.6" cy="6" r="2.7" fill="#fff" stroke="#222" stroke-width="1"/><circle cx="3.4" cy="6" r=".9" fill="#c51a2b"/><circle cx="8.6" cy="6" r=".9" fill="#589642"/></svg>
 <div class="abs tt" style="left:16px;top:13.5px;font-size:9.5px;color:#333;letter-spacing:-0.2px">trip<span style="color:#589442">advisor</span></div>
 <div class="abs" style="left:86px;top:14.5px;width:64px;height:9px;border:1px solid #e2e2e2;background:#fff"></div>
 <div class="abs tt" style="left:89px;top:16.3px;font-size:4.6px;color:#3a3a3a">Search</div>
 <div class="abs" style="left:140px;top:16px;width:5px;height:5px;border:1.2px solid #589442;border-radius:50%"></div>
 <div class="abs tt" style="left:166px;top:16.8px;font-size:4.8px;font-weight:bold;color:#589442">Sign in ▼</div>
 <div class="abs" style="left:0;top:27.5px;width:192.5px;height:14.2px;background:#f2f2f2;border-bottom:1px solid #e0e0e0"></div>
 <div class="abs tt" style="left:10px;top:32.5px;font-size:3.6px;color:#333;font-weight:bold">Hotels</div>
 <div class="abs" style="left:4.5px;top:40px;width:23px;height:1.5px;background:#589442"></div>
 <div class="abs tt" style="left:35px;top:32.5px;font-size:3.6px;color:#3a3a3a;word-spacing:1px">Restaurants</div>
 <div class="abs tt" style="left:69px;top:32.5px;font-size:3.6px;color:#3a3a3a">Things to do</div>
 <div class="abs tt" style="left:104px;top:32.5px;font-size:3.6px;color:#3a3a3a">Flights</div>
 <div class="abs tt" style="left:129px;top:32.5px;font-size:3.6px;color:#3a3a3a">Vacation Rentals</div>
 <div class="abs tt" style="left:176px;top:30px;font-size:4px;color:#589442">•••</div>
 <!-- photo -->
 <div class="abs" style="left:0;top:41.7px;width:192.5px;height:240.5px;overflow:hidden;background:linear-gradient(180deg,#a3b9dc 0,#b8c8e2 30px,#d2dcea 52px,#e0e6ee 62px,#c8d2dc 75px,#6a8090 95px,#3a5060 120px)">
  <svg class="abs" style="left:0;top:0" width="193" height="241" viewBox="0 0 193 241">
   <defs>
    <linearGradient id="tam" x1="0" y1="0" x2="0" y2="1"><stop offset="0" stop-color="#9ab0c4" stop-opacity=".1"/><stop offset=".35" stop-color="#7890a0"/><stop offset=".7" stop-color="#4a6668"/><stop offset="1" stop-color="#3a5048"/></linearGradient>
    <linearGradient id="taw" x1="0" y1="0" x2="0" y2="1"><stop offset="0" stop-color="#c8c4b4"/><stop offset=".25" stop-color="#8898b4"/><stop offset=".65" stop-color="#5e7090"/><stop offset="1" stop-color="#3a4868"/></linearGradient>
    <linearGradient id="tac" x1="0" y1="0" x2="0" y2="1"><stop offset="0" stop-color="#6a7a70"/><stop offset=".5" stop-color="#a09888"/><stop offset="1" stop-color="#b8a890"/></linearGradient>
    <filter id="fb1"><feGaussianBlur stdDeviation=".8"/></filter>
    <filter id="fb05"><feGaussianBlur stdDeviation=".4"/></filter>
    <filter id="fb2"><feGaussianBlur stdDeviation="2.5"/></filter>
   </defs>
   <path d="M0 76 C15 70 30 68 45 72 C60 66 75 62 95 64 C110 66 125 72 140 78 C160 82 180 82 193 84 V125 H0 Z" fill="url(#tam)" filter="url(#fb2)"/>
   <path d="M0 92 C10 84 25 80 40 86 L55 96 H0 Z" fill="#3a5448" filter="url(#fb1)"/>
   <path d="M55 98 C70 80 95 76 118 90 L145 104 H45 Z" fill="#2e4838" filter="url(#fb1)"/>
   <path d="M0 98 C40 92 80 98 120 100 C150 98 175 96 193 100 V124 C150 120 100 118 60 120 C35 124 15 132 0 140 Z" fill="url(#tac)" filter="url(#fb05)"/>
   <g filter="url(#fb05)"><rect x="61.5" y="101.3" width="4.6" height="2.2" fill="#a8a098"/><rect x="17.9" y="121.4" width="5.6" height="2.6" fill="#e8e4dc"/><rect x="82.4" y="99.5" width="2.4" height="3.3" fill="#a8a098"/><rect x="23.5" y="112.0" width="4.5" height="4.8" fill="#a8a098"/><rect x="111.3" y="99.1" width="2.9" height="3.7" fill="#d8d0c4"/><rect x="55.0" y="102.4" width="2.5" height="2.9" fill="#d8d0c4"/><rect x="19.6" y="120.7" width="2.8" height="2.3" fill="#e8e4dc"/><rect x="107.2" y="111.6" width="4.0" height="3.6" fill="#c8c0b4"/><rect x="88.5" y="118.3" width="3.4" height="2.7" fill="#d8d0c4"/><rect x="132.8" y="103.4" width="4.3" height="3.6" fill="#c8c0b4"/><rect x="138.6" y="104.3" width="5.9" height="2.4" fill="#f0ece4"/><rect x="31.3" y="112.7" width="5.7" height="3.3" fill="#e8e4dc"/><rect x="145.3" y="110.6" width="5.5" height="2.9" fill="#c8c0b4"/><rect x="112.9" y="110.8" width="3.8" height="4.5" fill="#c8c0b4"/><rect x="90.1" y="112.6" width="2.2" height="4.1" fill="#a8a098"/><rect x="188.7" y="116.1" width="3.1" height="3.2" fill="#c8c0b4"/><rect x="4.3" y="122.1" width="2.7" height="2.4" fill="#e8e4dc"/><rect x="41.5" y="109.0" width="5.0" height="3.2" fill="#f0ece4"/><rect x="15.3" y="119.1" width="4.2" height="4.7" fill="#f0ece4"/><rect x="164.2" y="104.1" width="3.7" height="3.1" fill="#f0ece4"/><rect x="182.0" y="101.3" width="2.7" height="2.7" fill="#d8d0c4"/><rect x="2.3" y="130.7" width="2.7" height="2.8" fill="#d8d0c4"/><rect x="79.6" y="106.1" width="4.3" height="4.9" fill="#a8a098"/><rect x="180.5" y="112.4" width="5.0" height="3.4" fill="#a8a098"/><rect x="74.6" y="106.8" width="2.4" height="3.9" fill="#e8e4dc"/><rect x="36.2" y="125.6" width="3.8" height="2.3" fill="#a8a098"/><rect x="10.0" y="110.5" width="2.6" height="2.3" fill="#c8c0b4"/><rect x="116.6" y="99.5" width="2.8" height="3.1" fill="#c8c0b4"/><rect x="181.5" y="111.3" width="3.9" height="2.3" fill="#f0ece4"/><rect x="188.7" y="108.3" width="3.9" height="2.3" fill="#e8e4dc"/><rect x="142.4" y="114.3" width="3.9" height="4.1" fill="#a8a098"/><rect x="4.4" y="132.8" width="4.1" height="2.4" fill="#a8a098"/><rect x="173.7" y="114.7" width="3.2" height="3.9" fill="#e8e4dc"/><rect x="132.3" y="103.7" width="3.5" height="2.5" fill="#d8d0c4"/><rect x="101.2" y="115.1" width="3.3" height="2.7" fill="#d8d0c4"/><rect x="153.2" y="116.0" width="5.0" height="2.7" fill="#a8a098"/><rect x="93.6" y="114.1" width="6.0" height="4.4" fill="#f0ece4"/><rect x="49.2" y="115.9" width="5.8" height="3.3" fill="#c8c0b4"/><rect x="181.5" y="106.0" width="2.9" height="2.7" fill="#d8d0c4"/><rect x="64.2" y="108.6" width="5.9" height="3.8" fill="#e8e4dc"/><rect x="91.1" y="112.4" width="5.2" height="2.3" fill="#e8e4dc"/><rect x="172.9" y="115.2" width="5.0" height="3.4" fill="#d8d0c4"/><rect x="82.4" y="112.0" width="2.3" height="4.8" fill="#f0ece4"/><rect x="88.0" y="114.4" width="2.3" height="2.5" fill="#d8d0c4"/><rect x="5.2" y="124.7" width="3.9" height="4.0" fill="#a8a098"/></g>
   <g filter="url(#fb05)"><circle cx="157.0" cy="121.6" r="1.1" fill="#ff9a30"/><circle cx="29.6" cy="122.4" r="0.6" fill="#ffb848"/><circle cx="100.1" cy="120.5" r="0.9" fill="#ffd070"/><circle cx="157.0" cy="104.6" r="0.8" fill="#ff9a30"/><circle cx="95.2" cy="116.8" r="0.8" fill="#ffe090"/><circle cx="158.5" cy="101.3" r="1.1" fill="#ffe090"/><circle cx="125.9" cy="117.9" r="1.0" fill="#ffd070"/><circle cx="101.0" cy="111.5" r="0.6" fill="#ffe090"/><circle cx="147.5" cy="113.4" r="1.1" fill="#ffd070"/><circle cx="32.7" cy="120.0" r="1.1" fill="#ffb848"/><circle cx="61.9" cy="113.5" r="1.0" fill="#ffb848"/><circle cx="167.8" cy="101.3" r="0.7" fill="#ffb848"/><circle cx="146.7" cy="111.2" r="1.0" fill="#ffb848"/><circle cx="84.2" cy="113.5" r="1.0" fill="#ffd070"/><circle cx="131.6" cy="110.0" r="1.0" fill="#ffe090"/><circle cx="96.5" cy="105.4" r="1.0" fill="#ff9a30"/><circle cx="175.3" cy="119.6" r="0.7" fill="#ffe090"/><circle cx="26.1" cy="114.0" r="0.9" fill="#ffb848"/><circle cx="127.5" cy="109.4" r="0.7" fill="#ff9a30"/><circle cx="148.9" cy="119.7" r="0.7" fill="#ff9a30"/><circle cx="27.2" cy="130.4" r="1.3" fill="#ffd070"/><circle cx="141.9" cy="102.1" r="1.2" fill="#ffd070"/><circle cx="188.1" cy="118.3" r="0.7" fill="#ffe090"/><circle cx="188.9" cy="108.9" r="0.9" fill="#ff9a30"/><circle cx="60.5" cy="118.3" r="0.6" fill="#ffe090"/><circle cx="83.7" cy="100.4" r="0.8" fill="#ff9a30"/><circle cx="97.3" cy="101.4" r="1.3" fill="#ffd070"/><circle cx="184.6" cy="102.3" r="0.8" fill="#ffb848"/><circle cx="172.1" cy="104.0" r="1.1" fill="#ffe090"/><circle cx="161.4" cy="114.9" r="1.3" fill="#ffe090"/><circle cx="28.4" cy="130.9" r="1.0" fill="#ff9a30"/><circle cx="17.0" cy="114.9" r="1.1" fill="#ffe090"/><circle cx="170.1" cy="105.9" r="0.6" fill="#ffb848"/><circle cx="152.3" cy="101.8" r="1.2" fill="#ffb848"/><circle cx="50.2" cy="107.8" r="0.6" fill="#ffe090"/><circle cx="176.1" cy="105.9" r="0.7" fill="#ffd070"/><circle cx="178.2" cy="121.3" r="0.8" fill="#ffd070"/><circle cx="38.3" cy="115.0" r="0.8" fill="#ffd070"/><circle cx="55.1" cy="114.8" r="0.7" fill="#ff9a30"/><circle cx="152.7" cy="121.9" r="0.6" fill="#ffb848"/></g>
   <path d="M0 124 C30 119 60 117 100 118 C140 118 160 120 193 122 V241 H0 Z" fill="url(#taw)"/>
   <ellipse cx="105" cy="128" rx="46" ry="9" fill="#e6dcb8" opacity=".6" filter="url(#fb2)"/>
   <path d="M58 119.5 C90 117 130 117.5 165 121" fill="none" stroke="#ffc048" stroke-width="2.6" filter="url(#fb1)"/>
   <path d="M2 141 C25 133 48 126 62 120" fill="none" stroke="#ff9a38" stroke-width="2.2" filter="url(#fb1)"/>
   <path d="M150 122 C165 117 180 119 193 121 V143 C180 141 165 135 152 129 Z" fill="#3a4c3e" filter="url(#fb1)"/>
   <g fill="#ffc060" filter="url(#fb05)"><circle cx="160" cy="124" r="1"/><circle cx="172" cy="128" r="1"/><circle cx="184" cy="133" r="1"/><circle cx="178" cy="124" r=".8"/></g>
   <circle cx="142.6" cy="170.8" r=".5" fill="#e8e8f0" opacity=".8"/><circle cx="66.5" cy="165.9" r=".5" fill="#e8e8f0" opacity=".8"/><circle cx="170.8" cy="141.9" r=".5" fill="#e8e8f0" opacity=".8"/><circle cx="154.6" cy="163.1" r=".5" fill="#e8e8f0" opacity=".8"/><circle cx="109.3" cy="189.2" r=".5" fill="#e8e8f0" opacity=".8"/><circle cx="95.0" cy="167.9" r=".5" fill="#e8e8f0" opacity=".8"/><circle cx="136.3" cy="198.9" r=".5" fill="#e8e8f0" opacity=".8"/><circle cx="88.0" cy="189.1" r=".5" fill="#e8e8f0" opacity=".8"/><circle cx="138.9" cy="176.3" r=".5" fill="#e8e8f0" opacity=".8"/><circle cx="96.7" cy="157.6" r=".5" fill="#e8e8f0" opacity=".8"/><circle cx="47.6" cy="143.4" r=".5" fill="#e8e8f0" opacity=".8"/><circle cx="49.9" cy="183.2" r=".5" fill="#e8e8f0" opacity=".8"/><circle cx="75.8" cy="145.6" r=".5" fill="#e8e8f0" opacity=".8"/><circle cx="51.8" cy="189.7" r=".5" fill="#e8e8f0" opacity=".8"/><circle cx="161.9" cy="178.6" r=".5" fill="#e8e8f0" opacity=".8"/><circle cx="79.5" cy="150.7" r=".5" fill="#e8e8f0" opacity=".8"/><circle cx="81.0" cy="164.9" r=".5" fill="#e8e8f0" opacity=".8"/><circle cx="62.1" cy="164.0" r=".5" fill="#e8e8f0" opacity=".8"/><circle cx="76.9" cy="197.5" r=".5" fill="#e8e8f0" opacity=".8"/><circle cx="176.2" cy="170.6" r=".5" fill="#e8e8f0" opacity=".8"/><circle cx="74.2" cy="197.8" r=".5" fill="#e8e8f0" opacity=".8"/><circle cx="83.3" cy="158.2" r=".5" fill="#e8e8f0" opacity=".8"/><circle cx="40.1" cy="159.8" r=".5" fill="#e8e8f0" opacity=".8"/><circle cx="106.5" cy="167.7" r=".5" fill="#e8e8f0" opacity=".8"/><circle cx="68.1" cy="167.8" r=".5" fill="#e8e8f0" opacity=".8"/><circle cx="40.7" cy="152.2" r=".5" fill="#e8e8f0" opacity=".8"/><circle cx="52.6" cy="161.0" r=".5" fill="#e8e8f0" opacity=".8"/><circle cx="45.8" cy="136.5" r=".5" fill="#e8e8f0" opacity=".8"/><circle cx="82.6" cy="150.1" r=".5" fill="#e8e8f0" opacity=".8"/><circle cx="122.0" cy="169.4" r=".5" fill="#e8e8f0" opacity=".8"/>
   <path d="M0 136 C25 150 55 175 72 186 C90 195 100 200 108 202 L122 241 H0 Z" fill="#2c3a26"/>
   <path d="M10 160 C30 175 50 190 60 200" stroke="#4a5a3a" stroke-width="3" opacity=".5" filter="url(#fb1)"/>
   <path d="M80 196 C95 200 105 205 112 215 L120 241 H95 Z" fill="#8a6a50" opacity=".45" filter="url(#fb1)"/>
  </svg>
  <div class="abs" style="left:12.4px;top:7.5px;width:169px;height:11px;background:#fff;border-radius:1px"></div>
  <div class="abs tt" style="left:15px;top:10.5px;font-size:4px;color:#aaa">City or hotel name</div>
  <div class="abs" style="left:12.4px;top:21.3px;width:57px;height:11.6px;background:#fff"></div>
  <div class="abs" style="left:72.2px;top:21.3px;width:57px;height:11.6px;background:#fff"></div>
  <div class="abs" style="left:17px;top:24.5px;width:5px;height:5px;background:#5aa845"></div>
  <div class="abs" style="left:77px;top:24.5px;width:5px;height:5px;background:#5aa845"></div>
  <div class="abs tt" style="left:25px;top:24.5px;font-size:4.2px;color:#888">Check In</div>
  <div class="abs tt" style="left:85px;top:24.5px;font-size:4.2px;color:#888">Check Out</div>
  <div class="abs" style="left:132.5px;top:22px;width:50px;height:10px;background:linear-gradient(#6cbc58,#4c9a3c);border-radius:1px"></div>
  <div class="abs tt" style="left:145px;top:24.5px;font-size:4.2px;font-weight:bold;color:#fff">Find Hotels</div>
  <div class="abs" style="left:46.3px;top:202px;width:99.4px;height:28.5px;background:rgba(20,24,28,.7)"></div>
  <div class="abs tt" style="left:60px;top:211.5px;font-size:7.4px;color:#fff">Rio de Janeiro</div>
  <div class="abs tt" style="left:131px;top:209px;font-size:10px;color:#fff">›</div>
 </div>
</div>
<!-- OneNote thumb -->
<div class="abs th" style="left:1162px;top:544.4px;width:554.5px;height:312.6px;overflow:hidden;background:#fff;border:1px solid #80397b">
 <div class="abs" style="left:3px;top:3px;width:6px;height:6px;background:#80397b;border-radius:1px"></div>
 <div class="abs" style="left:14px;top:3px;width:6px;height:6px;border:1px solid #4a7ab8;border-radius:50%"></div>
 <div class="abs tt" style="left:24px;top:1.5px;font-size:7px;color:#3a6ab0">ↄ</div>
 <div class="abs" style="left:33px;top:3.5px;width:5px;height:5px;background:#999"></div>
 <div class="abs" style="left:42px;top:3px;width:5px;height:6px;background:#777;border-radius:50% 50% 10% 10%"></div>
 <div class="abs tt" style="left:0;width:554px;text-align:center;top:2.5px;font-size:4.8px;color:#444">Vacation - OneNote</div>
 <div class="abs tt" style="left:494px;top:2px;font-size:5px;color:#555">?</div>
 <div class="abs" style="left:506px;top:3.5px;width:6px;height:4.5px;border:1px solid #777"></div>
 <div class="abs" style="left:518px;top:6px;width:5px;height:1px;background:#777"></div>
 <div class="abs" style="left:530px;top:3.5px;width:5px;height:4.5px;border:1px solid #777"></div>
 <div class="abs tt" style="left:542px;top:1.5px;font-size:6px;color:#555">×</div>
 <div class="abs" style="left:0;top:13px;width:24.5px;height:9.7px;background:#80397b"></div>
 <div class="abs tt" style="left:7px;top:15.5px;font-size:4.6px;color:#fff">FILE</div>
 <div class="abs" style="left:26px;top:12.8px;width:24.5px;height:10.5px;border:1px solid #d5d5d5;border-bottom:none;background:#fff"></div>
 <div class="abs tt" style="left:30.5px;top:15.5px;font-size:4.6px;color:#80397b">HOME</div>
 <div class="abs tt" style="left:57px;top:15.5px;font-size:4.6px;color:#3a3a3a;word-spacing:12px">INSERT DRAW HISTORY REVIEW VIEW</div>
 <div class="abs tt" style="left:506px;top:16px;font-size:4px;color:#444">Antonio Onio ▼</div>
 <div class="abs" style="left:541px;top:13px;width:10px;height:9px;background:linear-gradient(135deg,#3a6a3a,#c8a080 50%,#2a4a2a)"></div>
 <div class="abs" style="left:0;top:22.7px;width:554px;height:37.3px;background:#fff;border-top:1px solid #d8d8d8;border-bottom:1px solid #d8d8d8"></div>
 <svg class="abs" style="left:0;top:22.7px" width="182" height="37" viewBox="0 22.7 182 37">
  <rect x="5.6" y="27" width="9.5" height="11" rx="1" fill="#f0c060"/><rect x="9.5" y="30.5" width="7.5" height="8.5" fill="#fff" stroke="#666" stroke-width=".5"/><rect x="8" y="26" width="4" height="2" fill="#777"/>
  <path d="M21.5 25.5 L26 31.5 M26 25.5 L21.5 31.5" stroke="#3a6ab8" stroke-width=".9"/><circle cx="21.8" cy="31.5" r="1.2" fill="none" stroke="#3a6ab8" stroke-width=".6"/><circle cx="25.8" cy="31.5" r="1.2" fill="none" stroke="#3a6ab8" stroke-width=".6"/>
  <rect x="21" y="35" width="4" height="4.5" fill="#e8eef8" stroke="#7a8ab0" stroke-width=".5"/><rect x="23" y="36.5" width="4" height="4.5" fill="#e8eef8" stroke="#7a8ab0" stroke-width=".5"/>
  <path d="M22 50 L27 45.5" stroke="#e0a040" stroke-width="1.8"/>
  <rect x="66.5" y="28" width="33.5" height="8.2" fill="#fff" stroke="#c4c4c4" stroke-width=".6"/><rect x="100.7" y="28" width="15.8" height="8.2" fill="#fff" stroke="#c4c4c4" stroke-width=".6"/>
  <g fill="#3a6ab8"><rect x="118.5" y="29" width="1.1" height="1.1"/><rect x="118.5" y="31.5" width="1.1" height="1.1"/><rect x="118.5" y="34" width="1.1" height="1.1"/><rect x="132" y="29" width="1" height="6"/></g>
  <g fill="#777"><rect x="120.5" y="29.2" width="5" height=".8"/><rect x="120.5" y="31.7" width="5" height=".8"/><rect x="120.5" y="34.2" width="5" height=".8"/><rect x="133.5" y="29.2" width="5" height=".8"/><rect x="133.5" y="31.7" width="5" height=".8"/><rect x="133.5" y="34.2" width="5" height=".8"/>
   <rect x="151" y="30" width="6" height=".8"/><rect x="151" y="33" width="6" height=".8"/><rect x="159" y="30" width="6" height=".8"/><rect x="159" y="33" width="6" height=".8"/>
   <rect x="152" y="43" width="6" height=".8"/><rect x="152" y="45" width="4" height=".8"/><rect x="152" y="47" width="6" height=".8"/></g>
  <path d="M149 31.5 L151 30 V33 Z M157 31.5 L159 30 V33 Z" fill="#3a6ab8"/>
  <path d="M173 29 L177 33 L174 36 L170 32 Z" fill="#f07090"/>
  <rect x="121" y="47.5" width="6.5" height="1.4" fill="#f0e000"/><path d="M122 46 L124.5 41 L127 46" fill="none" stroke="#555" stroke-width=".8"/>
  <path d="M135 47 L138.5 40.5 L142 47 Z" fill="#111"/><rect x="134.5" y="47.2" width="8" height="1.4" fill="#111"/>
  <path d="M169 42 L174 47 M174 42 L169 47" stroke="#555" stroke-width=".9"/>
 </svg>
 <div class="abs tt" style="left:5px;top:40.6px;font-size:4.6px;color:#333">Paste</div>
 <div class="abs tt" style="left:28.5px;top:27px;font-size:4.4px;color:#aaa;line-height:8.6px">Cut<br>Copy</div>
 <div class="abs tt" style="left:28px;top:45.2px;font-size:4.4px;color:#222">Format Painter</div>
 <div class="abs tt" style="left:23px;top:54.6px;font-size:3.8px;color:#555">Clipboard</div>
 <div class="abs" style="left:64px;top:24px;width:0.6px;height:34px;background:#e2e2e2"></div>
 <div class="abs tt" style="left:67.5px;top:30px;font-size:4.2px;font-weight:bold;color:#222">Calibri</div>
 <div class="abs tt" style="left:102px;top:30px;font-size:4.2px;font-weight:bold;color:#222">11</div>
 <div class="abs tt" style="left:68.5px;top:40.8px;font-size:5px;color:#444;word-spacing:3.4px">B <i>I</i> <u>U</u> abc X₂</div>
 <div class="abs tt" style="left:112px;top:54.6px;font-size:3.8px;color:#555">Basic Text</div>
 <div class="abs" style="left:180px;top:24px;width:0.6px;height:34px;background:#e2e2e2"></div>
 <div class="abs" style="left:182.5px;top:25px;width:52px;height:23.5px;border:1px solid #e0e0e0;background:#fafafa"></div>
 <div class="abs tt" style="left:184.5px;top:26.5px;font-size:6.3px;color:#8a9aa8;line-height:10.5px">Heading 1<br>Heading 2</div>
 <div class="abs tt" style="left:208px;top:53.5px;font-size:3.6px;color:#444">Styles</div>
 <div class="abs" style="left:240px;top:24px;width:0.6px;height:34px;background:#e2e2e2"></div>
 <div class="abs" style="left:243px;top:25px;width:40px;height:23px;border:1px solid #e0e0e0"></div>
 <div class="abs tt" style="left:245px;top:26px;font-size:4.2px;font-weight:bold;color:#222;line-height:5.5px"><span style="color:#4a7ab8">■</span> To Do (Ctrl+1)<br><span style="color:#e8a020">●</span> Important (Ctrl+2)<br><span style="color:#8a4aa8">?</span> Question (Ctrl+3)</div>
 <div class="abs" style="left:288px;top:25px;width:8px;height:8px;border:1px solid #4a7ab8;background:#fff"></div>
 <div class="abs tt" style="left:288.5px;top:23.5px;font-size:8px;color:#e02020">√</div>
 <div class="abs" style="left:299px;top:25px;width:9px;height:8px;background:repeating-linear-gradient(#4a7ab8 0 1px,transparent 1px 3px)"></div>
 <div class="abs" style="left:316px;top:24px;width:1px;height:9px;background:#555"></div><div class="abs" style="left:317px;top:24px;width:6px;height:5px;background:#e8502a;clip-path:polygon(0 0,100% 50%,0 100%)"></div>
 <div class="abs tt" style="left:286px;top:35.5px;font-size:4px;color:#444;line-height:4.6px;word-spacing:5px">To Do Find Outlook<br>Tag &nbsp;Tags Tasks</div>
 <div class="abs tt" style="left:290px;top:53.5px;font-size:3.6px;color:#444">Tags</div>
 <div class="abs" style="left:327px;top:24px;width:0.6px;height:34px;background:#e2e2e2"></div>
 <div class="abs" style="left:332px;top:25px;width:9px;height:8px;border:1px solid #888;border-radius:50% 50% 0 0"></div>
 <div class="abs" style="left:349px;top:24px;width:10px;height:9px;background:#b8c4d4;border:1px solid #888"></div>
 <div class="abs tt" style="left:330px;top:35.5px;font-size:4px;color:#444;line-height:4.6px">Email &nbsp;Meeting<br>Page &nbsp;&nbsp;Details▼</div>
 <div class="abs tt" style="left:331px;top:53.5px;font-size:3.6px;color:#444">Email Meetings</div>
 <div class="abs" style="left:364px;top:24px;width:0.6px;height:34px;background:#e2e2e2"></div>
 <!-- notebooks pane -->
 <div class="abs" style="left:0;top:60.5px;width:77.2px;height:252px;background:#f3f3f3;border-right:1px solid #e0e0e0"></div>
 <div class="abs tt" style="left:4px;top:67px;font-size:7.2px;color:#444">Notebooks</div>
 <div class="abs tt" style="left:70px;top:67.5px;font-size:4.5px;color:#444">¬</div>
 <div class="abs" style="left:4px;top:79.6px;width:7px;height:9px;background:#5cb86a;border-radius:1px"></div><div class="abs tt" style="left:17.5px;top:81.0px;font-size:6.2px;color:#444">Personal</div><div class="abs tt" style="left:70px;top:81.6px;font-size:4px;color:#444">v</div><div class="abs" style="left:3px;top:93.1px;width:72px;height:0.6px;background:#ddd"></div><div class="abs" style="left:4px;top:96.7px;width:7px;height:9px;background:#4cb4a4;border-radius:1px"></div><div class="abs tt" style="left:17.5px;top:98.10000000000001px;font-size:6.2px;color:#444">Notes for Alan</div><div class="abs tt" style="left:70px;top:98.7px;font-size:4px;color:#444">v</div><div class="abs" style="left:3px;top:110.2px;width:72px;height:0.6px;background:#ddd"></div><div class="abs" style="left:4px;top:113.6px;width:7px;height:9px;background:#a4acb4;border-radius:1px"></div><div class="abs tt" style="left:17.5px;top:115.0px;font-size:6.2px;color:#444">Kitchen remodel</div><div class="abs tt" style="left:70px;top:115.6px;font-size:4px;color:#444">v</div><div class="abs" style="left:3px;top:127.1px;width:72px;height:0.6px;background:#ddd"></div><div class="abs" style="left:2px;top:128.2px;width:73px;height:17px;background:#dcdcdc"></div><div class="abs" style="left:4px;top:130.7px;width:7px;height:9px;background:#f2c230;border-radius:1px"></div><div class="abs tt" style="left:17.5px;top:132.1px;font-size:6.2px;color:#444">Vacations</div><div class="abs tt" style="left:70px;top:132.7px;font-size:4px;color:#444">v</div><div class="abs" style="left:3px;top:144.2px;width:72px;height:0.6px;background:#ddd"></div><div class="abs" style="left:4px;top:147.8px;width:7px;height:9px;background:#f2c230;border-radius:1px"></div><div class="abs tt" style="left:17.5px;top:149.20000000000002px;font-size:6.2px;color:#444">Kids</div><div class="abs tt" style="left:70px;top:149.8px;font-size:4px;color:#444">v</div><div class="abs" style="left:3px;top:161.3px;width:72px;height:0.6px;background:#ddd"></div><div class="abs" style="left:4px;top:164.7px;width:7px;height:9px;background:#f2a05a;border-radius:1px"></div><div class="abs tt" style="left:17.5px;top:166.1px;font-size:6.2px;color:#444">Teaching</div><div class="abs tt" style="left:70px;top:166.7px;font-size:4px;color:#444">v</div><div class="abs" style="left:3px;top:178.2px;width:72px;height:0.6px;background:#ddd"></div>
 <div class="abs" style="left:3px;top:299px;width:72px;height:0.6px;background:#ddd"></div>
 <div class="abs" style="left:5px;top:301px;width:5px;height:7px;border:0.8px solid #888;background:#fff"></div>
 <div class="abs tt" style="left:17px;top:303px;font-size:4.2px;color:#333">Quick Notes</div>
 <!-- section tabs -->
 <div class="abs" style="left:80px;top:66.3px;width:41px;height:11.6px;background:#a9c9ee;border-radius:2px 2px 0 0"></div>
 <div class="abs tt" style="left:85px;top:69px;font-size:4.2px;color:#333">Vacation Ideas</div>
 <div class="abs" style="left:122px;top:68px;width:36px;height:10px;background:#f2a9cb;border-radius:2px 2px 0 0"></div>
 <div class="abs tt" style="left:129px;top:70px;font-size:4.2px;color:#333">Packing List</div>
 <div class="abs" style="left:159px;top:68px;width:30px;height:10px;background:#a8b8e4;border-radius:2px 2px 0 0"></div>
 <div class="abs tt" style="left:165px;top:70px;font-size:4.2px;color:#333">Coupons</div>
 <div class="abs" style="left:190px;top:68px;width:51px;height:10px;background:#c3b4e4;border-radius:2px 2px 0 0"></div>
 <div class="abs tt" style="left:197px;top:70px;font-size:4.2px;color:#333">Housesitting Notes</div>
 <div class="abs" style="left:243px;top:69px;width:13px;height:9px;border:1px solid #d8d8d8;border-bottom:none;background:#fafafa"></div>
 <div class="abs tt" style="left:247px;top:69.5px;font-size:6px;color:#888">+</div>
 <div class="abs" style="left:78px;top:77.3px;width:476px;height:1.6px;background:#a9c9ee"></div>
 <div class="abs" style="left:78px;top:78.9px;width:1px;height:234px;background:#a9c9ee"></div>
 <!-- search -->
 <div class="abs" style="left:474px;top:65.5px;width:77px;height:8px;border:1px solid #d8d8d8;background:#fff"></div>
 <div class="abs tt" style="left:476px;top:67px;font-size:4px;color:#888">Search (Ctrl+E)</div>
 <div class="abs tt" style="left:541px;top:66px;font-size:5px;color:#3a6ab0">○▼</div>
 <!-- pages pane -->
 <div class="abs" style="left:487px;top:78.8px;width:67.5px;height:234px;background:#dde8f4;border-left:1px solid #b8d0ea"></div>
 <div class="abs" style="left:487px;top:78.8px;width:67.5px;height:11.8px;background:#a4c4e8"></div>
 <div class="abs" style="left:493px;top:81px;width:5px;height:5px;border:0.8px solid #fff;border-radius:50%"></div>
 <div class="abs tt" style="left:501px;top:81.5px;font-size:4.6px;color:#333">Add Page</div>
 <div class="abs" style="left:488px;top:97.6px;width:63.5px;height:8.4px;background:#fff"></div>
 <div class="abs tt" style="left:492px;top:97.5px;font-size:4.1px;color:#222;line-height:9.1px">European Vacation<br>Amsterdam<br>Berlin<br>Music Reviews<br>Blogs</div>
 <!-- page content -->
 <div class="abs" style="left:472px;top:85px;width:4px;height:4px;border-top:1px solid #777;border-right:1px solid #777"></div>
 <div class="abs tt" style="left:111.6px;top:98.5px;font-size:10.5px;color:#222;transform:scaleX(.92);transform-origin:0 0">European Vacation</div>
 <div class="abs" style="left:106px;top:111.3px;width:117px;height:0.6px;background:#ccc"></div>
 <div class="abs tt" style="left:112px;top:113px;font-size:3.8px;color:#444">Monday, October 20, 2014</div>
 <div class="abs tt" style="left:159px;top:113px;font-size:3.8px;color:#444">10:08 AM</div>
 <div class="abs" style="left:90.5px;top:127.5px;width:4px;height:4px;border:0.8px solid #4a7ab0"></div><div class="abs tt" style="left:101px;top:127.0px;font-size:4.2px;font-weight:bold;color:#222">Passport</div><div class="abs" style="left:90.5px;top:134.7px;width:4px;height:4px;border:0.8px solid #4a7ab0"></div><div class="abs tt" style="left:101px;top:134.2px;font-size:4.2px;font-weight:bold;color:#222">Hotel reservations</div><div class="abs" style="left:90.5px;top:141.9px;width:4px;height:4px;border:0.8px solid #4a7ab0"></div><div class="abs tt" style="left:101px;top:141.4px;font-size:4.2px;font-weight:bold;color:#222">Rail pass</div><div class="abs" style="left:90.5px;top:149.1px;width:4px;height:4px;border:0.8px solid #4a7ab0"></div><div class="abs tt" style="left:101px;top:148.6px;font-size:4.2px;font-weight:bold;color:#222">Flights</div><div class="abs" style="left:90.5px;top:156.3px;width:4px;height:4px;border:0.8px solid #4a7ab0"></div><div class="abs tt" style="left:101px;top:155.8px;font-size:4.2px;font-weight:bold;color:#222">Backpack</div><div class="abs" style="left:90.5px;top:163.5px;width:4px;height:4px;border:0.8px solid #4a7ab0"></div><div class="abs tt" style="left:101px;top:163.0px;font-size:4.2px;font-weight:bold;color:#222">Download music and movies</div><div class="abs" style="left:90.5px;top:170.7px;width:4px;height:4px;border:0.8px solid #4a7ab0"></div><div class="abs tt" style="left:101px;top:170.2px;font-size:4.2px;font-weight:bold;color:#222">Bring tablet</div>
 <div class="abs tt" style="left:90.2px;top:124.5px;font-size:6px;color:#e02020">√</div>
 <div class="abs" style="left:313px;top:131px;width:9px;height:9px;background:#fff;border:0.6px solid #ddd"></div>
 <div class="abs" style="left:314.5px;top:133px;width:5px;height:5px;background:#d24726"></div>
 <div class="abs tt" style="left:307px;top:145px;font-size:3.6px;color:#333;line-height:5px;text-align:center">European<br>&nbsp;Vacation</div>
 <svg class="abs" style="left:384px;top:118.6px" width="93" height="61.6" viewBox="0 0 93 61.6">
  <defs><linearGradient id="prs" x1="0" y1="0" x2="0" y2="1"><stop offset="0" stop-color="#e6e6e6"/><stop offset="1" stop-color="#d8d8d8"/></linearGradient>
  <linearGradient id="prw" x1="0" y1="0" x2="0" y2="1"><stop offset="0" stop-color="#8a8c8a"/><stop offset=".5" stop-color="#b8b8b4"/><stop offset="1" stop-color="#9a9a98"/></linearGradient>
  <filter id="prb"><feGaussianBlur stdDeviation=".4"/></filter></defs>
  <rect width="93" height="61.6" fill="url(#prs)"/>
  <g filter="url(#prb)">
  <path d="M50 28 L56 24 L60 26 L64 22 L70 25 L78 24 L93 27 V36 H45 Z" fill="#b09a90"/>
  <path d="M58 24 L60 18 L62 24 Z" fill="#8a7a78"/>
  <rect x="45" y="31" width="48" height="6" fill="#c8b8a8"/>
  <rect x="62" y="31" width="20" height="4" fill="#b83a2a"/>
  <rect x="45" y="35" width="12" height="3" fill="#3a9ad0"/>
  <rect x="45" y="37" width="48" height="25" fill="url(#prw)"/>
  <path d="M0 2 L5 2 L6 8 L9 7 L10 14 L14 13 L16 22 L22 24 L26 30 L32 34 L32 61.6 H0 Z" fill="#4a3a2a"/>
  <path d="M32 34 L45 37 L45 61.6 H32 Z" fill="#5a4a38"/>
  <path d="M4 61.6 V46 A7 7 0 0 1 18 46 V61.6 Z" fill="#1a1410"/>
  <rect x="20" y="20" width="2" height="14" fill="#2a2018"/>
  </g>
 </svg>
 <!-- embedded -->
 <div class="abs" style="left:86px;top:185px;width:271px;height:2.5px;background:#e4e4e4"></div>
 <div class="abs" style="left:89.4px;top:188px;width:199.3px;height:35.6px;border:0.6px dashed #aaa"></div>
 <div class="abs tt" style="left:121px;top:199px;font-size:10px;color:#333;transform:scaleX(.92);transform-origin:0 0">Trip Budget</div>
 <div class="abs" style="left:98px;top:211px;width:10px;height:10px;background:#d8e4d8;border:0.6px solid #999"></div>
 <div class="abs" style="left:100px;top:214px;width:4px;height:5px;background:#1e7a3a"></div>
 <div class="abs" style="left:86px;top:188px;width:271px;height:125px;border-right:0.6px solid #e4e4e4"></div>
 <div class="abs tt" style="left:94px;top:230.0px;font-size:4.4px;font-weight:bold;color:#222">Item</div><div class="abs tt" style="left:126px;top:230.0px;width:22px;text-align:right;font-size:4.4px;font-weight:bold;color:#222">Budget</div><div class="abs" style="left:93px;top:236.3px;width:220px;height:0.5px;background:#e4e4e4"></div><div class="abs tt" style="left:94px;top:237.7px;font-size:4.4px;font-weight:normal;color:#222">Airfare</div><div class="abs tt" style="left:126px;top:237.7px;width:22px;text-align:right;font-size:4.4px;font-weight:normal;color:#222">$1000</div><div class="abs" style="left:93px;top:244.0px;width:220px;height:0.5px;background:#e4e4e4"></div><div class="abs tt" style="left:94px;top:245.4px;font-size:4.4px;font-weight:normal;color:#222">Hotel</div><div class="abs tt" style="left:126px;top:245.4px;width:22px;text-align:right;font-size:4.4px;font-weight:normal;color:#222">$900</div><div class="abs" style="left:93px;top:251.70000000000002px;width:220px;height:0.5px;background:#e4e4e4"></div><div class="abs tt" style="left:94px;top:253.1px;font-size:4.4px;font-weight:normal;color:#222">Car</div><div class="abs tt" style="left:126px;top:253.1px;width:22px;text-align:right;font-size:4.4px;font-weight:normal;color:#222">$500</div><div class="abs" style="left:93px;top:259.4px;width:220px;height:0.5px;background:#e4e4e4"></div><div class="abs tt" style="left:94px;top:260.8px;font-size:4.4px;font-weight:normal;color:#222">Food</div><div class="abs tt" style="left:126px;top:260.8px;width:22px;text-align:right;font-size:4.4px;font-weight:normal;color:#222">$650</div><div class="abs" style="left:93px;top:267.1px;width:220px;height:0.5px;background:#e4e4e4"></div><div class="abs tt" style="left:94px;top:268.5px;font-size:4.4px;font-weight:normal;color:#222">Zoo</div><div class="abs tt" style="left:126px;top:268.5px;width:22px;text-align:right;font-size:4.4px;font-weight:normal;color:#222">$350</div><div class="abs" style="left:93px;top:274.8px;width:220px;height:0.5px;background:#e4e4e4"></div><div class="abs tt" style="left:94px;top:276.2px;font-size:4.4px;font-weight:normal;color:#222">Memorabilia</div><div class="abs tt" style="left:126px;top:276.2px;width:22px;text-align:right;font-size:4.4px;font-weight:normal;color:#222">$200</div><div class="abs" style="left:93px;top:282.5px;width:220px;height:0.5px;background:#e4e4e4"></div><div class="abs tt" style="left:94px;top:283.9px;font-size:4.4px;font-weight:normal;color:#222">Shopping</div><div class="abs tt" style="left:126px;top:283.9px;width:22px;text-align:right;font-size:4.4px;font-weight:normal;color:#222">$400</div><div class="abs" style="left:93px;top:290.2px;width:220px;height:0.5px;background:#e4e4e4"></div>
 <div class="abs" style="left:122px;top:230px;width:0.5px;height:82px;background:#e4e4e4"></div>
 <div class="abs" style="left:149px;top:225px;width:0.5px;height:87px;background:#e4e4e4"></div>
 <div class="abs" style="left:166px;top:234.7px;width:156.5px;height:80px;background:#fff;border:0.6px solid #e0e0e0"></div>
 <div class="abs tt" style="left:229px;top:237.5px;font-size:6.4px;color:#3a3a3a">Trip budget</div>
 <svg class="abs" style="left:166px;top:234.7px" width="156" height="78" viewBox="0 0 156 78">
  <g transform="translate(77.5 57.8)">
   <path d="M0 0 L0 -35 A35 35 0 0 1 34.6 5.4 Z" fill="#a8f25c" stroke="#fff" stroke-width=".6"/>
   <path d="M0 0 L34.6 5.4 A35 35 0 0 1 -8 34 Z" fill="#0a7fa0" stroke="#fff" stroke-width=".6"/>
   <path d="M0 0 L-8 34 A35 35 0 0 1 -18 30 Z" fill="#9a60d0" stroke="#fff" stroke-width=".6"/>
   <path d="M0 0 L-18 30 A35 35 0 0 1 -35 0 Z" fill="#fbb816" stroke="#fff" stroke-width=".6"/>
   <path d="M0 0 L-35 0 A35 35 0 0 1 -28 -21 Z" fill="#e82020" stroke="#fff" stroke-width=".6"/>
   <path d="M0 0 L-28 -21 A35 35 0 0 1 -18.5 -29.7 Z" fill="#f57a10" stroke="#fff" stroke-width=".6"/>
   <path d="M0 0 L-18.5 -29.7 A35 35 0 0 1 0 -35 Z" fill="#fcee10" stroke="#fff" stroke-width=".6"/>
  </g>
  <text x="43" y="11" font-size="3.5" fill="#333" font-family="Liberation Sans">Shopping</text><text x="48" y="15" font-size="3.5" fill="#333" font-family="Liberation Sans">11%</text>
  <text x="28" y="22" font-size="3.5" fill="#333" font-family="Liberation Sans">Memorabilia</text><text x="38" y="26" font-size="3.5" fill="#333" font-family="Liberation Sans">5%</text>
  <text x="34" y="42" font-size="3.5" fill="#333" font-family="Liberation Sans">Zoo</text><text x="34" y="46" font-size="3.5" fill="#333" font-family="Liberation Sans">9%</text>
  <text x="118" y="22" font-size="3.5" fill="#333" font-family="Liberation Sans">Airfare</text><text x="120" y="26" font-size="3.5" fill="#333" font-family="Liberation Sans">26%</text>
  <text x="62" y="78" font-size="3.5" fill="#333" font-family="Liberation Sans">Food</text>
 </svg>
 <div class="abs" style="left:323px;top:228px;width:30px;height:84px;background:repeating-linear-gradient(180deg,transparent 0 7px,#e8e8e8 7px 7.6px)"></div>
</div>
<!-- Excel thumb -->
<div class="abs th shd" style="left:1752.5px;top:577.6px;width:299px;height:221.2px;overflow:hidden;background:#fff;border:1px solid #217346">
 <div class="abs" style="left:3px;top:2.5px;width:7px;height:6.5px;background:#1e7a3a"></div>
 <div class="abs" style="left:13.5px;top:2.5px;width:6px;height:6px;border:1.1px solid #8a4a8a"></div>
 <div class="abs tt" style="left:24px;top:1px;font-size:7px;color:#3a6ab0">ↄ</div><div class="abs tt" style="left:34px;top:1px;font-size:7px;color:#3a6ab0">c</div>
 <div class="abs" style="left:44px;top:3px;width:5px;height:6px;background:#777;border-radius:50% 50% 10% 10%"></div>
 <div class="abs tt" style="left:0;width:299px;text-align:center;top:2.6px;font-size:4.4px;color:#444">Family Budget - Microsoft Excel</div>
 <div class="abs tt" style="left:241px;top:2px;font-size:5px;color:#555">?</div>
 <div class="abs" style="left:252px;top:3.5px;width:5.5px;height:4.5px;border:1px solid #777"></div>
 <div class="abs" style="left:264px;top:6px;width:5px;height:1px;background:#777"></div>
 <div class="abs" style="left:276px;top:3.5px;width:5px;height:4.5px;border:1px solid #777"></div>
 <div class="abs tt" style="left:287px;top:1.5px;font-size:6px;color:#999">×</div>
 <div class="abs" style="left:0;top:12px;width:22.5px;height:10px;background:#217346"></div>
 <div class="abs tt" style="left:6px;top:14.5px;font-size:4.6px;color:#fff">FILE</div>
 <div class="abs" style="left:25px;top:11.8px;width:24.5px;height:10.7px;border:1px solid #d5d5d5;border-bottom:none;background:#fff"></div>
 <div class="abs tt" style="left:30px;top:14.5px;font-size:4.6px;color:#217346">HOME</div>
 <div class="abs tt" style="left:57px;top:14.5px;font-size:4.4px;color:#444;word-spacing:6.5px">INSERT <span style="word-spacing:0">PAGE LAYOUT</span> FORMULAS DATA REVIEW VIEW</div>
 <div class="abs tt" style="left:246px;top:14.5px;font-size:4.4px;color:#444">Antonio Onio ▼</div>
 <div class="abs" style="left:287px;top:12px;width:10px;height:10px;background:linear-gradient(135deg,#3a6a3a,#c8a080 50%,#2a4a2a)"></div>
 <div class="abs" style="left:0;top:22.3px;width:299px;height:40.3px;border-top:1px solid #d8d8d8;border-bottom:1px solid #d8d8d8;background:#fff"></div>
 <div class="abs" style="left:5px;top:27px;width:8px;height:11px;background:#e8c070;border:1px solid #a08050"></div>
 <div class="abs tt" style="left:4px;top:42px;font-size:4px;color:#444">Paste</div>
 <div class="abs" style="left:19.5px;top:26px;width:6px;height:22px;background:linear-gradient(#5a7ab8 0 18%,transparent 18% 38%,#7a8aa8 38% 56%,transparent 56% 76%,#c8a040 76%)"></div>
 <div class="abs tt" style="left:2px;top:56px;font-size:3.7px;color:#555;word-spacing:8px">Clipboard</div>
 <div class="abs" style="left:35px;top:24px;width:0.6px;height:37px;background:#e2e2e2"></div>
 <div class="abs" style="left:38px;top:27px;width:31px;height:7px;border:1px solid #c8c8c8"></div>
 <div class="abs tt" style="left:40px;top:28px;font-size:4px;color:#222">Calibri</div>
 <div class="abs" style="left:70px;top:27px;width:17px;height:7px;border:1px solid #c8c8c8"></div>
 <div class="abs tt" style="left:40px;top:36px;font-size:4.6px;color:#3a3a3a;letter-spacing:3px">BIU AA</div>
 <div class="abs" style="left:39px;top:44px;width:45px;height:5px;background:repeating-linear-gradient(90deg,#666 0 5px,transparent 5px 9px)"></div>
 <div class="abs" style="left:55px;top:48.5px;width:6px;height:1.5px;background:#f0e000"></div><div class="abs" style="left:70px;top:48.5px;width:6px;height:1.5px;background:#e02020"></div>
 <div class="abs tt" style="left:56px;top:56px;font-size:3.7px;color:#555">Font</div>
 <div class="abs" style="left:93px;top:24px;width:0.6px;height:37px;background:#e2e2e2"></div>
 <div class="abs" style="left:97px;top:27px;width:40px;height:22px;background:repeating-linear-gradient(180deg,#7a8aa8 0 2.5px,transparent 2.5px 9px)"></div>
 <div class="abs" style="left:114px;top:26px;width:9px;height:8px;background:#a8d8b0"></div>
 <div class="abs tt" style="left:100px;top:56px;font-size:3.7px;color:#555">Alignment</div>
 <div class="abs" style="left:138px;top:24px;width:0.6px;height:37px;background:#e2e2e2"></div>
 <div class="abs" style="left:140px;top:27px;width:35px;height:7px;border:1px solid #c8c8c8"></div>
 <div class="abs tt" style="left:142px;top:28px;font-size:4px;font-weight:bold;color:#222">General</div>
 <div class="abs tt" style="left:143px;top:37px;font-size:5px;color:#3a3a3a;word-spacing:2px">$ - % ,</div>
 <div class="abs tt" style="left:143px;top:45px;font-size:4.5px;color:#3a6ab0">+0 00</div>
 <div class="abs tt" style="left:150px;top:56px;font-size:3.7px;color:#555">Number</div>
 <div class="abs" style="left:178px;top:24px;width:0.6px;height:37px;background:#e2e2e2"></div>
 <div class="abs tt" style="left:180px;top:28px;font-size:4.2px;font-weight:bold;color:#333;line-height:9.8px"><span style="color:#c05050">■</span> Conditional Formatting ▼<br><span style="color:#4a7ab8">■</span> Format as Table ▼<br><span style="color:#4a7ab8">■</span> Cell Styles ▼</div>
 <div class="abs tt" style="left:204px;top:56px;font-size:3.7px;color:#555">Styles</div>
 <div class="abs" style="left:244px;top:24px;width:0.6px;height:37px;background:#e2e2e2"></div>
 <div class="abs" style="left:247px;top:29px;width:10px;height:10px;border:1px solid #777;background:#e8eef8"></div>
 <div class="abs" style="left:263px;top:29px;width:10px;height:10px;border:1px solid #777;background:#f8f8f8"></div>
 <div class="abs tt" style="left:246px;top:43px;font-size:4px;color:#444;word-spacing:3px">Cells Editing</div>
 <div class="abs" style="left:280px;top:24px;width:0.6px;height:37px;background:#e2e2e2"></div>
 <!-- formula bar -->
 <div class="abs" style="left:5px;top:65px;width:36.5px;height:10px;border:1px solid #d0d0d0;background:#fff"></div>
 <div class="abs tt" style="left:35px;top:66.5px;font-size:4px;color:#444">▼</div>
 <div class="abs" style="left:54px;top:65px;width:39px;height:10px;border:1px solid #d0d0d0;background:#fff"></div>
 <div class="abs tt" style="left:58px;top:66.3px;font-size:5px;color:#444;word-spacing:2px">× √ fx</div>
 <div class="abs" style="left:95px;top:65px;width:201px;height:10px;border:1px solid #d0d0d0;background:#fff"></div>
 <!-- grid -->
 <div class="abs" style="left:1px;top:78.5px;width:278px;height:8.5px;background:#fff;border-bottom:1px solid #c8c8c8"></div>
 <div class="abs" style="left:1px;top:78.5px;width:13px;height:121px;background:#fff;border-right:1px solid #c8c8c8"></div>
 <div class="abs tt" style="left:13.9px;width:14.499999999999998px;top:80.5px;text-align:center;font-size:4.8px;font-weight:bold;color:#444">A</div><div class="abs" style="left:28.4px;top:78.5px;width:0.5px;height:121px;background:#dadada"></div><div class="abs tt" style="left:28.4px;width:49.6px;top:80.5px;text-align:center;font-size:4.8px;font-weight:bold;color:#444">B</div><div class="abs" style="left:78.0px;top:78.5px;width:0.5px;height:121px;background:#dadada"></div><div class="abs tt" style="left:78.0px;width:33.7px;top:80.5px;text-align:center;font-size:4.8px;font-weight:bold;color:#444">C</div><div class="abs" style="left:111.7px;top:78.5px;width:0.5px;height:121px;background:#dadada"></div><div class="abs tt" style="left:111.7px;width:33.60000000000001px;top:80.5px;text-align:center;font-size:4.8px;font-weight:bold;color:#444">D</div><div class="abs" style="left:145.3px;top:78.5px;width:0.5px;height:121px;background:#dadada"></div><div class="abs tt" style="left:145.3px;width:32.89999999999998px;top:80.5px;text-align:center;font-size:4.8px;font-weight:bold;color:#444">E</div><div class="abs" style="left:178.2px;top:78.5px;width:0.5px;height:121px;background:#dadada"></div><div class="abs tt" style="left:178.2px;width:32.900000000000006px;top:80.5px;text-align:center;font-size:4.8px;font-weight:bold;color:#444">F</div><div class="abs" style="left:211.1px;top:78.5px;width:0.5px;height:121px;background:#dadada"></div><div class="abs tt" style="left:211.1px;width:33.599999999999994px;top:80.5px;text-align:center;font-size:4.8px;font-weight:bold;color:#444">G</div><div class="abs" style="left:244.7px;top:78.5px;width:0.5px;height:121px;background:#dadada"></div><div class="abs tt" style="left:244.7px;width:33.69999999999999px;top:80.5px;text-align:center;font-size:4.8px;font-weight:bold;color:#444">H</div><div class="abs" style="left:278.4px;top:78.5px;width:0.5px;height:121px;background:#dadada"></div>
 <div class="abs tt" style="left:1px;width:13px;top:94.65px;text-align:center;font-size:4.8px;font-weight:bold;color:#444">1</div><div class="abs" style="left:1px;top:107.9px;width:278px;height:0.5px;background:#dadada"></div><div class="abs tt" style="left:1px;width:13px;top:110.12500000000001px;text-align:center;font-size:4.8px;font-weight:bold;color:#444">2</div><div class="abs" style="left:1px;top:117.95px;width:278px;height:0.5px;background:#dadada"></div><div class="abs tt" style="left:1px;width:13px;top:120.175px;text-align:center;font-size:4.8px;font-weight:bold;color:#444">3</div><div class="abs" style="left:1px;top:128.0px;width:278px;height:0.5px;background:#dadada"></div><div class="abs tt" style="left:1px;width:13px;top:130.225px;text-align:center;font-size:4.8px;font-weight:bold;color:#444">4</div><div class="abs" style="left:1px;top:138.05px;width:278px;height:0.5px;background:#dadada"></div><div class="abs tt" style="left:1px;width:13px;top:140.275px;text-align:center;font-size:4.8px;font-weight:bold;color:#444">5</div><div class="abs" style="left:1px;top:148.10000000000002px;width:278px;height:0.5px;background:#dadada"></div><div class="abs tt" style="left:1px;width:13px;top:150.325px;text-align:center;font-size:4.8px;font-weight:bold;color:#444">6</div><div class="abs" style="left:1px;top:158.15px;width:278px;height:0.5px;background:#dadada"></div><div class="abs tt" style="left:1px;width:13px;top:160.375px;text-align:center;font-size:4.8px;font-weight:bold;color:#444">7</div><div class="abs" style="left:1px;top:168.20000000000002px;width:278px;height:0.5px;background:#dadada"></div><div class="abs tt" style="left:1px;width:13px;top:170.425px;text-align:center;font-size:4.8px;font-weight:bold;color:#444">8</div><div class="abs" style="left:1px;top:178.25px;width:278px;height:0.5px;background:#dadada"></div><div class="abs tt" style="left:1px;width:13px;top:180.475px;text-align:center;font-size:4.8px;font-weight:bold;color:#444">9</div><div class="abs" style="left:1px;top:188.3px;width:278px;height:0.5px;background:#dadada"></div><div class="abs tt" style="left:1px;width:13px;top:190.525px;text-align:center;font-size:4.8px;font-weight:bold;color:#444">10</div><div class="abs" style="left:1px;top:198.35000000000002px;width:278px;height:0.5px;background:#dadada"></div>
 <div class="abs tt" style="left:30.4px;top:91.5px;font-size:12px;color:#6aa040;transform:scaleX(.95);transform-origin:0 0">Family Budget</div>
 <div class="abs" style="left:28.4px;top:127.4px;width:182.6px;height:72px;background:#fff;border:0.5px solid #e0e0e0"></div>
 <div class="abs tt" style="left:100px;top:131.5px;font-size:7.2px;color:#3a3a3a">Categories</div>
 <svg class="abs" style="left:28.4px;top:127.4px" width="183" height="72" viewBox="0 0 183 72">
  <g transform="translate(91 71.3)">
   <path d="M0 0 V-42 A42 42 0 0 1 41.5 6 Z" fill="#6e9a4a" stroke="#fff" stroke-width=".8"/>
   <path d="M0 0 L-41 9 A42 42 0 0 1 -35 -23 Z" fill="#a8d08a" stroke="#fff" stroke-width=".8"/>
   <path d="M0 0 L-35 -23 A42 42 0 0 1 -19 -37.5 Z" fill="#c2dcaa" stroke="#fff" stroke-width=".8"/>
   <path d="M0 0 L-19 -37.5 A42 42 0 0 1 0 -42 Z" fill="#d6e8c6" stroke="#fff" stroke-width=".8"/>
  </g>
  <text x="66" y="31" font-size="4.4" font-weight="bold" fill="#333" font-family="Liberation Sans">Vacation</text>
  <text x="33" y="46.5" font-size="4.4" font-weight="bold" fill="#333" font-family="Liberation Sans">Education</text>
  <text x="137" y="66" font-size="4.4" font-weight="bold" fill="#333" font-family="Liberation Sans">Housing</text>
  <text x="8" y="72" font-size="4.4" font-weight="bold" fill="#333" font-family="Liberation Sans">Entertainment</text>
 </svg>
 <div class="abs" style="left:213.5px;top:127.4px;width:65px;height:72px;background:#fff;border:0.5px solid #e0e0e0"></div>
 <div class="abs tt" style="left:235px;top:147px;font-size:4.4px;font-weight:bold;color:#333;line-height:14px">$4,000<br>$3,900<br>$3,800<br>$3,700</div>
 <div class="abs" style="left:285px;top:189px;width:5px;height:10px;background:#6aa040"></div>
 <div class="abs" style="left:289px;top:80px;width:8px;height:119px;background:#f4f4f4;border-left:1px solid #e0e0e0"></div>
 <div class="abs" style="left:290px;top:90px;width:6px;height:22px;background:#fff;border:1px solid #c8c8c8"></div>
 <!-- sheet tabs -->
 <div class="abs" style="left:0;top:199.5px;width:299px;height:10px;background:#f2f2f2;border-top:1px solid #d8d8d8"></div>
 <div class="abs tt" style="left:7px;top:201.5px;font-size:4px;color:#aaa;word-spacing:6px">◄ ►</div>
 <div class="abs" style="left:32px;top:199.5px;width:26px;height:9px;background:#fff;border-bottom:1.2px solid #217346"></div>
 <div class="abs tt" style="left:35px;top:201.5px;font-size:4.3px;font-weight:bold;color:#222">Expenses</div>
 <div class="abs" style="left:72px;top:201.5px;width:5px;height:5px;border:0.7px solid #888;border-radius:50%"></div>
 <div class="abs" style="left:103px;top:201px;width:35px;height:6px;background:#fff;border:1px solid #ccc"></div>
 <!-- status -->
 <div class="abs" style="left:0;top:210px;width:299px;height:11.2px;background:#217346"></div>
 <div class="abs tt" style="left:5px;top:213px;font-size:4.4px;font-weight:bold;color:#fff">READY</div>
 <div class="abs" style="left:169px;top:212.5px;width:60px;height:6px;background:repeating-linear-gradient(90deg,#fff 0 5px,transparent 5px 17px)"></div>
 <div class="abs" style="left:236px;top:215px;width:34px;height:0.8px;background:#fff"></div>
 <div class="abs tt" style="left:279px;top:213px;font-size:4.4px;color:#fff">100%</div>
</div>
<!-- Fresh Paint thumb -->
<div class="abs th shd" style="left:2087px;top:545px;width:561.2px;height:332px;overflow:hidden;background:#e9e8e3">
 <div class="abs" style="left:0;top:0;width:561.2px;height:16.6px;background:#ececec"></div>
 <div class="abs" style="left:1.3px;top:1.3px;width:14px;height:14px;background:#fdd116"></div>
 <div class="abs" style="left:3.5px;top:4px;width:9px;height:8px;border:1.6px solid #b5121b"></div>
 <div class="abs" style="left:23px;top:7.5px;width:5px;height:1.5px;background:#333"></div>
 <div class="abs tt" style="left:0;width:561px;text-align:center;top:3.5px;font-size:8.2px;color:#222;transform:scaleX(.92)">Fresh Paint</div>
 <div class="abs" style="left:514px;top:10px;width:6px;height:1.6px;background:#222"></div>
 <div class="abs" style="left:531.5px;top:4.5px;width:6.5px;height:6px;border:1.2px solid #222;border-top-width:2px"></div>
 <div class="abs tt" style="left:548px;top:2px;font-size:9px;font-weight:bold;color:#111">×</div>
 <svg class="abs" style="left:0;top:16.6px" width="562" height="120" viewBox="0 16.6 562 120">
  <g fill="none" stroke="#555" stroke-width="1.1"><circle cx="13" cy="29.1" r="7.3"/><circle cx="43.3" cy="29.1" r="7.3"/><circle cx="74" cy="29.1" r="7.3"/><circle cx="104.5" cy="29.1" r="7.3"/></g>
  <path d="M17 29.1 H9.5 M12 26 L9 29.1 L12 32.2" stroke="#555" stroke-width="1.1" fill="none"/>
  <rect x="39.5" y="27" width="7.5" height="5" fill="none" stroke="#555" stroke-width=".9"/>
  <rect x="70" y="26.5" width="8" height="6" fill="none" stroke="#555" stroke-width=".9"/>
  <rect x="100" y="27" width="9" height="4.5" fill="none" stroke="#555" stroke-width=".9"/>
  <path d="M28 136 V51 Q28 47.3 32 47.3 H84.6 Q88.6 47.3 88.6 51 V136" fill="#f4f3ef" stroke="#d6d5d0" stroke-width=".8"/>
  <path d="M101 136 V51 Q101 47.3 105 47.3 H300.8 Q304.8 47.3 304.8 51 V136" fill="#f4f3ef" stroke="#d6d5d0" stroke-width=".8"/>
  <path d="M43 61.5 H47 M76 61.5 H80 M78 59.5 V63.5" stroke="#aaa" stroke-width=".9"/>
  <circle cx="62" cy="61.5" r="5" fill="none" stroke="#bbb" stroke-width=".7" stroke-dasharray="1 1"/>
  <defs><linearGradient id="fper" x1="0" y1="0" x2="0" y2="1"><stop offset="0" stop-color="#e8a890"/><stop offset=".5" stop-color="#d48a6a"/><stop offset="1" stop-color="#b8684a"/></linearGradient>
  <linearGradient id="fhan" x1="0" y1="0" x2="1" y2="0"><stop offset="0" stop-color="#0a3a2a"/><stop offset=".5" stop-color="#2a6a52"/><stop offset="1" stop-color="#0a3a2a"/></linearGradient></defs>
  <rect x="44" y="82.7" width="16.3" height="41.3" rx="3" fill="url(#fper)"/>
  <path d="M71 88 L73 84 L75 88 V128 L73 131 L71 128 Z" fill="#e8e4d8" stroke="#bbb" stroke-width=".5"/>
  <g fill="#bdbcb6"><path d="M108 65 H115 L119 63 C124 62 129 63 132 66 C129 69 124 70 119 69 L115 67 H108 Z"/><path d="M108 83 H115 L119 81 C124 80 129 81 132 84 C129 87 124 88 119 87 L115 85 H108 Z" fill="#9a9890"/>
  <path d="M108 98 H118 L122 96 L132 100 L122 104 L118 102 H108 Z"/><path d="M108 115 H117 L120 113 C127 113 131 115 132 116 C131 117 127 119 120 119 L117 117 H108 Z"/></g>
  <rect x="104.5" y="77.5" width="35" height="17" rx="2" fill="#e4e3dd" opacity=".8"/>
  <path d="M108 83 H115 L119 81 C124 80 129 81 132 84 C129 87 124 88 119 87 L115 85 H108 Z" fill="#9a9890"/>
  <path d="M160 62 H165 M276 62 H282 M279 59 V65" stroke="#999" stroke-width="1"/>
  <path d="M170 62 Q220 60.5 270 62 Q220 63.5 170 62 Z" fill="#444" stroke="#444" stroke-width=".8"/>
  <g><rect x="167" y="112" width="3" height="24" fill="url(#fhan)"/><path d="M167.3 112 L168.5 76 L169.7 112 Z" fill="#ddd"/><path d="M168 76 L168.5 69 L169 76 Z" fill="#111"/>
  <rect x="185" y="112" width="4" height="24" fill="url(#fhan)"/><path d="M185.5 112 L187 86 L188.5 112 Z" fill="#ccc"/><path d="M185.8 94 L187 83 L188.2 94 Z" fill="#111"/>
  <rect x="207" y="112" width="4.5" height="24" fill="url(#fhan)"/><path d="M205.5 112 V96 H213 V112 Z" fill="#eee" stroke="#bbb" stroke-width=".5"/><rect x="204.5" y="85" width="9.5" height="11" rx="2" fill="#3ab060"/>
  <rect x="231" y="112" width="4" height="24" fill="url(#fhan)"/><path d="M230 112 V96 H236 V112 Z" fill="#eee" stroke="#bbb" stroke-width=".5"/><path d="M230 96 V88 Q233 83 236 88 V96 Z" fill="#e0b080"/>
  <rect x="262" y="112" width="4" height="24" fill="url(#fhan)"/><rect x="262.5" y="99" width="3" height="13" fill="#ddd"/><path d="M264 100 L248 80 Q264 73 281 80 Z" fill="#f02020"/><path d="M264 100 L256 86 Q264 83 272 86 Z" fill="#e8a8a0"/></g>
 </svg>
 <!-- canvas -->
 <div class="abs" style="left:0;top:136px;width:561.2px;height:171px;overflow:hidden;background:#f2f2f2">
  <svg class="abs" style="left:0;top:0" width="562" height="171" viewBox="0 136 562 171">
   <defs><filter id="fpb"><feGaussianBlur stdDeviation="1.5"/></filter><filter id="fpb2"><feGaussianBlur stdDeviation="3"/></filter>
   <linearGradient id="grass" x1="0" y1="0" x2="0" y2="1"><stop offset="0" stop-color="#b8dc98"/><stop offset=".4" stop-color="#8cc858"/><stop offset="1" stop-color="#6cb838"/></linearGradient></defs>
   <rect x="0" y="136" width="562" height="171" fill="#f3f3f3"/>
   <path d="M0 262 C60 252 150 250 250 250 C350 248 450 250 562 252 V307 H0 Z" fill="url(#grass)" filter="url(#fpb)"/>
   <g fill="#d8ecc8" opacity=".6" filter="url(#fpb2)"><ellipse cx="40" cy="285" rx="25" ry="6"/><ellipse cx="200" cy="275" rx="40" ry="6"/><ellipse cx="330" cy="290" rx="30" ry="5"/></g>
   <g fill="#18a048"><rect x="143" y="261" width="7" height="4"/><rect x="166" y="263" width="6" height="6"/><rect x="175" y="277" width="8" height="6"/><rect x="190" y="274" width="6" height="7"/><rect x="200" y="277" width="6" height="6"/><rect x="228" y="266" width="6" height="3"/><rect x="270" y="276" width="5" height="3"/><rect x="285" y="268" width="6" height="4"/><rect x="57" y="293" width="6" height="10"/><rect x="135" y="282" width="10" height="6"/><rect x="318" y="270" width="8" height="4"/></g>
   <g filter="url(#fpb)"><path d="M20 140 C40 132 80 134 100 140 C125 132 160 136 175 145 C170 160 155 170 140 175 C125 182 110 176 100 172 C85 176 60 180 40 172 C25 168 15 158 20 140 Z" fill="#2e9a3e"/>
   <path d="M25 145 C35 140 55 142 60 150 C58 162 45 168 30 162 Z" fill="#6ab840"/><path d="M120 142 C135 140 150 144 148 158 C140 168 128 170 120 162 Z" fill="#84c040"/></g>
   <g fill="#ec1a1a"><ellipse cx="77" cy="150" rx="5" ry="5"/><ellipse cx="95" cy="142" rx="4" ry="3"/><ellipse cx="123" cy="144" rx="4" ry="4"/></g>
   <path d="M66 306 C70 270 74 220 79 175 C85 158 96 158 103 175 C105 220 106 260 110 306 Z" fill="#5a2e1c" filter="url(#fpb)"/>
   <g fill="#45200f"><rect x="84" y="200" width="6" height="10"/><rect x="92" y="225" width="7" height="12"/><rect x="80" y="250" width="8" height="14"/><rect x="94" y="270" width="8" height="16"/><rect x="72" y="285" width="9" height="18"/><rect x="86" y="180" width="5" height="9"/></g>
   <path d="M104 250 C108 265 110 285 112 306" stroke="#8ab860" stroke-width="3" opacity=".5" filter="url(#fpb)"/>
   <path d="M80 178 L52 156 M100 178 L140 160 M95 190 L120 190 M78 186 L60 178" stroke="#4a2616" stroke-width="4" filter="url(#fpb)"/>
   <path d="M58 168 C68 170 80 172 95 168" stroke="#9ab0e0" stroke-width="3" opacity=".6" filter="url(#fpb)"/>
   <!-- man -->
   <path d="M172 150 C178 143 195 143 200 151 L197 155 C190 152 180 152 174 155 Z" fill="#e8c020" filter="url(#fpb)"/>
   <ellipse cx="186" cy="164" rx="13" ry="15" fill="none" stroke="#a8a8a8" stroke-width="1.2"/>
   <path d="M181 171 C184 174 189 174 192 170" stroke="#111" stroke-width="1.4" fill="none"/><circle cx="188" cy="163" r="1" fill="#111"/>
   <path d="M187 179 V215 M160 201 C175 200 195 199 212 197 M187 215 L176 245 M187 215 L205 245 M176 245 L168 250 M205 245 L216 249" stroke="#a8a8a8" stroke-width="1.2" fill="none"/>
   <path d="M178 211 L197 211 L210 243 L202 245 L189 222 L180 244 L172 243 Z" fill="#1e3a9a"/>
   <!-- woman -->
   <path d="M220 184 C216 160 222 140 244 137 C262 136 270 155 268 184 Z" fill="#a8948c" opacity=".85" filter="url(#fpb)"/>
   <ellipse cx="245" cy="166" rx="11" ry="15" fill="#f2f2f2" stroke="#444" stroke-width=".8"/>
   <path d="M238 172 C242 178 250 177 254 171" stroke="#111" stroke-width="1.4" fill="none"/>
   <path d="M245 181 V192 M224 195 L236 199 M255 199 L268 195 M240 228 L232 250 M250 228 L268 250" stroke="#aaa" stroke-width="1.1" fill="none"/>
   <path d="M238 189 L252 189 L268 228 L228 229 Z" fill="#e81616"/>
   <!-- kid -->
   <path d="M296 178 C296 168 305 165 315 167 C320 170 322 176 318 180" stroke="#111" stroke-width="2.4" fill="none"/>
   <ellipse cx="309" cy="181" rx="10" ry="12" fill="none" stroke="#999" stroke-width="1"/>
   <path d="M309 193 V224 M296 210 L322 207 M303 236 L298 243 M313 236 L318 243" stroke="#aaa" stroke-width="1" fill="none"/>
   <path d="M302 223 H314 L315 236 L309 233 L300 237 Z" fill="#1e3aa0"/>
   <!-- house -->
   <g stroke="#111" stroke-width="1.3" fill="none">
    <path d="M392 162 L370 193 L420 196 Z"/><path d="M378 181 L408 183 M373 188 L414 190"/>
    <path d="M372 194 L375 247 M415 196 L418 247 M368 210 L340 212 L338 250 M345 215 L347 250"/>
    <rect x="381" y="207" width="10" height="11"/><rect x="403" y="208" width="9" height="10"/>
    <path d="M386 247 L388 228 L402 227 L404 247"/><path d="M402 170 V160 H410 V178"/>
   </g>
   <ellipse cx="397" cy="146" rx="27" ry="10" fill="#f0c020" opacity=".75" filter="url(#fpb)"/>
   <path d="M372 154 L364 158 M384 162 L382 168 M405 162 L410 168 M420 156 L428 160" stroke="#f0c040" stroke-width="1.5"/>
   <path d="M331 143.5 L335.5 140.5 L340 143.5 M459 148 C462 144 465 148 468 143" stroke="#111" stroke-width="1.2" fill="none"/>
   <!-- bush -->
   <path d="M420 307 C410 270 414 230 440 205 C460 190 490 196 500 215 C520 200 548 212 552 240 C562 260 560 290 555 307 Z" fill="#7cb638" filter="url(#fpb)"/>
   <path d="M430 250 C450 240 470 250 490 245 M500 260 C515 255 530 265 545 262" stroke="#6aa02a" stroke-width="2" fill="none" opacity=".6"/>
   <path d="M478 137 C490 142 505 140 520 138" stroke="#a8c0f0" stroke-width="3" opacity=".6" filter="url(#fpb)"/>
  </svg>
 </div>
 <!-- palette -->
 <svg class="abs" style="left:300px;top:16.6px" width="262" height="135" viewBox="300 16.6 262 135">
  <path d="M312 16.6 A123 123 0 0 0 558 16.6 Z" fill="#ecebe5" stroke="#d8d7d0" stroke-width="1"/>
  <path d="M361.5 16.6 A71 70 0 0 0 503.5 16.6 Z" fill="#e6e6e6" stroke="#dcdcd6" stroke-width=".8"/>
  <path d="M395 93 H475" stroke="#dddcd6" stroke-width=".8"/>
  <circle cx="405.5" cy="100" r="7.5" fill="#f2f2ee" stroke="#dcdcd6" stroke-width=".8"/><circle cx="424.5" cy="107" r="7.5" fill="#f2f2ee" stroke="#dcdcd6" stroke-width=".8"/><circle cx="445.5" cy="110" r="7.5" fill="#f2f2ee" stroke="#dcdcd6" stroke-width=".8"/><circle cx="466.5" cy="107" r="7.5" fill="#f2f2ee" stroke="#dcdcd6" stroke-width=".8"/><circle cx="485.5" cy="100" r="7.5" fill="#f2f2ee" stroke="#dcdcd6" stroke-width=".8"/>
  <circle cx="326" cy="37.9" r="6.2" fill="#f23cf0" stroke="rgba(0,0,0,.12)" stroke-width=".8"/><circle cx="324.5" cy="35.9" r="1.8" fill="#fff" opacity=".45"/><circle cx="332" cy="58" r="6.2" fill="#ee1414" stroke="rgba(0,0,0,.12)" stroke-width=".8"/><circle cx="330.5" cy="56" r="1.8" fill="#fff" opacity=".45"/><circle cx="340.3" cy="76.9" r="6.2" fill="#fa6a10" stroke="rgba(0,0,0,.12)" stroke-width=".8"/><circle cx="338.8" cy="74.9" r="1.8" fill="#fff" opacity=".45"/><circle cx="352.8" cy="94.6" r="6.2" fill="#fcc810" stroke="rgba(0,0,0,.12)" stroke-width=".8"/><circle cx="351.3" cy="92.6" r="1.8" fill="#fff" opacity=".45"/><circle cx="367.4" cy="108.8" r="6.2" fill="#0e9a3a" stroke="rgba(0,0,0,.12)" stroke-width=".8"/><circle cx="365.9" cy="106.8" r="1.8" fill="#fff" opacity=".45"/><circle cx="385.2" cy="120.6" r="6.2" fill="#7ab832" stroke="rgba(0,0,0,.12)" stroke-width=".8"/><circle cx="383.7" cy="118.6" r="1.8" fill="#fff" opacity=".45"/><circle cx="404.5" cy="128.9" r="6.2" fill="#7a8c9a" stroke="rgba(0,0,0,.12)" stroke-width=".8"/><circle cx="403.0" cy="126.9" r="1.8" fill="#fff" opacity=".45"/><circle cx="425.3" cy="132.4" r="6.2" fill="#10b0d0" stroke="rgba(0,0,0,.12)" stroke-width=".8"/><circle cx="423.8" cy="130.4" r="1.8" fill="#fff" opacity=".45"/><circle cx="446.6" cy="133.6" r="6.2" fill="#1a3aa8" stroke="rgba(0,0,0,.12)" stroke-width=".8"/><circle cx="445.1" cy="131.6" r="1.8" fill="#fff" opacity=".45"/><circle cx="467.4" cy="128.9" r="6.2" fill="#8a3ab0" stroke="rgba(0,0,0,.12)" stroke-width=".8"/><circle cx="465.9" cy="126.9" r="1.8" fill="#fff" opacity=".45"/><circle cx="486.3" cy="121.8" r="6.2" fill="#5a2a10" stroke="rgba(0,0,0,.12)" stroke-width=".8"/><circle cx="484.8" cy="119.8" r="1.8" fill="#fff" opacity=".45"/><circle cx="504" cy="109.5" r="6.2" fill="#e8a060" stroke="rgba(0,0,0,.12)" stroke-width=".8"/><circle cx="502.5" cy="107.5" r="1.8" fill="#fff" opacity=".45"/><circle cx="531.7" cy="76.9" r="6.2" fill="#ffffff" stroke="rgba(0,0,0,.12)" stroke-width=".8"/><circle cx="530.2" cy="74.9" r="1.8" fill="#fff" opacity=".45"/>
  <circle cx="363.9" cy="73.3" r="9" fill="none" stroke="#e040a0" stroke-width="3"/>
  <circle cx="363.9" cy="73.3" r="9" fill="none" stroke="#30a0e0" stroke-width="3" stroke-dasharray="9 19" />
  <circle cx="363.9" cy="73.3" r="9" fill="none" stroke="#f0d020" stroke-width="3" stroke-dasharray="6 50" stroke-dashoffset="-30"/>
  <circle cx="363.9" cy="73.3" r="6" fill="#f8f0f8"/>
  <circle cx="350.9" cy="45" r="8" fill="#e2e2de"/><circle cx="350.9" cy="45" r="5.5" fill="none" stroke="#111" stroke-width="2.2"/>
  <circle cx="506.9" cy="73.3" r="7.5" fill="#e6e6e2"/><circle cx="505" cy="71" r="2" fill="#40b0e0"/><circle cx="509" cy="72" r="1.5" fill="#f0a040"/>
  <path d="M511 88 C520 84 527 90 526 97 C525 103 516 106 511 101 C506 97 506 91 511 88 Z" fill="#050505"/>
  <circle cx="531.7" cy="37.9" r="21" fill="#d0d0cc" stroke="#b8b8b4" stroke-width="1"/>
  <circle cx="531.7" cy="37.9" r="17" fill="#ddd5c0"/>
  <circle cx="531.7" cy="37.9" r="13" fill="#d8cfb8"/>
 </svg>
 <div class="abs" style="left:0;top:307px;width:561.2px;height:25px;background:#e9e8e3"></div>
 <svg class="abs" style="left:240px;top:310px" width="80" height="20" viewBox="240 310 80 20">
  <g fill="none" stroke="#555" stroke-width="1"><circle cx="248.7" cy="319.2" r="6.5"/><circle cx="279.6" cy="319.2" r="6.5"/><circle cx="311.3" cy="319.2" r="6.5"/></g>
  <path d="M248.7 315.5 V323 M245 319.2 H252.5" stroke="#555" stroke-width="1.2"/>
  <rect x="277" y="316" width="5" height="6" fill="none" stroke="#555" stroke-width=".8"/>
  <path d="M308 317 H314 M308 321 H314" stroke="#555" stroke-width="1"/>
 </svg>
</div>

<!-- watermark -->
<div class="abs wm" style="left:2555px;top:1245.4px;transform:scaleX(0.915)">Windows Technical Preview</div><div class="abs wm" style="left:2555.2px;top:1278.8px;transform:scaleX(0.912)">Evaluation copy. Build 9841</div>

<div id="dark" class="abs"></div>
<svg class="abs" style="left:1280px;top:1380px" width="66" height="66" viewBox="1280 1380 66 66"><circle cx="1312.4" cy="1412.5" r="24.5" fill="none" stroke="#fff" stroke-width="4"/><rect x="1296.7" y="1409.5" width="31.9" height="6.2" fill="#fff"/><rect x="1309.4" y="1396.7" width="6.2" height="31.9" fill="#fff"/></svg>
<div class="abs" style="left:1362.3px;top:1391.5px;color:#fff;font-size:36px;line-height:1;white-space:nowrap;transform-origin:0 0;transform:scaleX(0.929)">Add a desktop</div>

<div id="tb" class="abs"></div>
<svg class="abs" style="left:0;top:1517px" width="2846" height="83" viewBox="0 1517 2846 83">
<!-- start -->
<path fill="#fff" d="M24.9 1537.3 L47.9 1533.6 V1556.3 H24.9 Z M49.5 1533.3 L79.3 1529.8 V1556.3 H49.5 Z M24.9 1558 H47.9 V1580.9 L24.9 1577.4 Z M49.5 1558 H79.3 V1584.7 L49.5 1581.2 Z"/>
<!-- search -->
<circle cx="172.1" cy="1552.8" r="13.2" fill="none" stroke="#fff" stroke-width="4.6"/>
<line x1="160.5" y1="1564.5" x2="147.3" y2="1577" stroke="#fff" stroke-width="6" stroke-linecap="round"/>
<!-- task view -->
<rect x="269.9" y="1542.5" width="37.3" height="27.4" fill="#fff" stroke="#9c9c9c" stroke-width="1.8"/>
<rect x="263.7" y="1548.7" width="37.3" height="27.4" fill="#fff" stroke="#9c9c9c" stroke-width="1.8"/>
<!-- IE -->
<defs><radialGradient id="ieg" cx="0.55" cy="0.45" r="0.6"><stop offset="0" stop-color="#dcf1f7"/><stop offset="0.6" stop-color="#95d6f2"/><stop offset="1" stop-color="#3aa3d6"/></radialGradient></defs>
<circle cx="413.3" cy="1557.3" r="28.6" fill="url(#ieg)" stroke="#2a7fb3" stroke-width="1.3"/>
<path d="M401.4 1553.8 A12.1 11.5 0 0 1 425.6 1553.8 Z" fill="#4a97d3" stroke="#2a7fb3" stroke-width="1"/>
<path d="M401.4 1561.6 H442.8 V1566.2 H424.3 A11.5 7 0 0 1 401.4 1566.2 Z" fill="#4a97d3" stroke="#2a7fb3" stroke-width="1"/>
<g transform="translate(408 1554.5) rotate(-44)"><path d="M-33 7.3 A40 13.5 0 1 1 33 7.3" fill="none" stroke="#f5c12a" stroke-width="4" stroke-linecap="round"/></g>
<!-- explorer -->
<path d="M543 1544 L548.6 1535 H568.8 V1544 Z" fill="#e8c285"/><path d="M547 1543.5 L550.5 1537.2 H567 L566 1543.5 Z" fill="#fff"/>
<rect x="508" y="1543.8" width="60.8" height="42.3" rx="1" fill="#e8c285"/>
<rect x="513" y="1558.8" width="51" height="28.5" rx="1" fill="#4a7fb9"/>
<rect x="528.7" y="1574.4" width="19.7" height="11" fill="#f0c080"/>
<!-- store -->
<rect x="637.4" y="1527" width="62.6" height="62.6" fill="#008a00"/>
<path d="M653.7 1547.5 C653 1530 676 1530 676.8 1546.5 M659 1547 C661 1531 680 1531 683 1545" fill="none" stroke="#fff" stroke-width="1.6"/>
<path d="M645.6 1549.3 L681 1541.2 L691 1544.8 V1579.8 L681 1583.3 L645.6 1576.4 Z" fill="#fff"/>
<path fill="#008a00" d="M652.4 1553.3 L661.4 1552.4 V1560.6 H652.4 Z M662.8 1552.2 L672 1551.3 V1560.6 H662.8 Z M652.4 1562 H661.4 V1570 L652.4 1569.2 Z M662.8 1562 H672 V1571 L662.8 1570.1 Z"/>
</svg>
<div class="abs tbtn" style="left:736px"></div>
<div class="abs tbtn" style="left:865px"></div>
<div class="abs tbtn" style="left:994px"></div>
<div class="abs tbtn" style="left:1123px"></div>
<div class="abs tbtn" style="left:1252px"></div>
<div class="abs tbtn" style="left:1381px"></div>
<svg class="abs" style="left:766px;top:1527px" width="63" height="63"><use href="#i-msn"/></svg>
<svg class="abs" style="left:892px;top:1525.7px" width="61" height="62.5" viewBox="0 0 40 41" preserveAspectRatio="none"><use href="#d-ppt"/></svg>
<svg class="abs" style="left:1024.8px;top:1527px" width="63" height="63"><use href="#i-ta"/></svg>
<svg class="abs" style="left:1153.7px;top:1527px" width="63" height="62.5" viewBox="0 0 40 40" preserveAspectRatio="none"><use href="#d-on"/></svg>
<svg class="abs" style="left:1284.2px;top:1527px" width="61.5" height="62.3" viewBox="0 0 40 40" preserveAspectRatio="none"><use href="#d-xl"/></svg>
<svg class="abs" style="left:1411.5px;top:1527px" width="63" height="63"><use href="#i-fp"/></svg>
<!-- tray -->
<svg class="abs" style="left:2300px;top:1517px" width="380" height="83" viewBox="2300 1517 380 83">
<rect x="2321.9" y="1540.4" width="62.4" height="37.4" rx="1.5" fill="#fff" stroke="#1f4a6e" stroke-width="1.8"/>
<rect x="2327.2" y="1546" width="51.8" height="26.8" fill="#1f4a6e"/>
<g fill="#fff"><rect x="2329.1" y="1547.8" width="6.8" height="6.1"/><rect x="2337.4" y="1547.8" width="6.7" height="6.1"/><rect x="2345.6" y="1547.8" width="6.6" height="6.1"/><rect x="2354" y="1547.8" width="6.7" height="6.1"/><rect x="2362.4" y="1547.8" width="6.7" height="6.1"/><rect x="2370.6" y="1547.8" width="6.7" height="6.1"/>
<rect x="2329.1" y="1555.9" width="6.8" height="6.4"/><rect x="2337.4" y="1555.9" width="6.7" height="6.4"/><rect x="2345.6" y="1555.9" width="6.6" height="6.4"/><rect x="2354" y="1555.9" width="6.7" height="6.4"/><rect x="2362.4" y="1555.9" width="6.7" height="6.4"/><rect x="2370.6" y="1555.9" width="6.7" height="6.4"/>
<rect x="2329.1" y="1564.4" width="8.7" height="6.7"/><rect x="2339.4" y="1564.4" width="27.6" height="6.7"/><rect x="2368.5" y="1564.4" width="8.8" height="6.7"/></g>
<polygon points="2423.5,1565.5 2434.5,1554.5 2445.5,1565.5" fill="#fff" stroke="#1f4a6e" stroke-width="1.8" stroke-linejoin="miter"/>
<rect x="2490.7" y="1544.8" width="4.3" height="31.3" fill="#fff" stroke="#1f4a6e" stroke-width="1.8"/>
<path d="M2495.5 1546.3 C2500 1544.5 2506 1544.5 2509 1547.5 L2509 1553 C2513 1552 2518 1552.5 2521.5 1552.5 C2520 1559 2514 1564 2508 1562 C2504 1560 2500 1559.5 2495.5 1561.5 Z" fill="#fff" stroke="#1f4a6e" stroke-width="1.8"/>
<path d="M2509 1553 V1561.5" stroke="#1f4a6e" stroke-width="1.5"/>
<path d="M2559.1 1571.7 V1565.8 H2565 V1561.3 H2571.3 V1557.3 H2577.5 V1553.2 H2583.8 V1549 H2590.8 V1571.7 Z" fill="#fff" stroke="#1f4a6e" stroke-width="1.8"/>
<path d="M2565 1565.8 V1571.7 M2571.3 1561.3 V1571.7 M2577.5 1557.3 V1571.7 M2583.8 1553.2 V1571.7" stroke="#1f4a6e" stroke-width="1.6"/>
<path d="M2625.8 1552.6 H2630.5 L2640.7 1544.3 V1576 L2630.5 1568.2 H2625.8 Z" fill="#fff" stroke="#1f4a6e" stroke-width="1.8"/>
<path d="M2630.5 1552.6 V1568.2" stroke="#1f4a6e" stroke-width="1.5"/>
<rect x="2641.2" y="1557.7" width="3" height="4.8" fill="#fff" stroke="#1f4a6e" stroke-width="1.2"/>
<path d="M2645.5 1552 A9 9 0 0 1 2645.5 1568" fill="none" stroke="#1f4a6e" stroke-width="5"/>
<path d="M2645.5 1552 A9 9 0 0 1 2645.5 1568" fill="none" stroke="#fff" stroke-width="2"/>
<path d="M2648.5 1547 A14 14 0 0 1 2648.5 1573" fill="none" stroke="#1f4a6e" stroke-width="5"/>
<path d="M2648.5 1547 A14 14 0 0 1 2648.5 1573" fill="none" stroke="#fff" stroke-width="2.2"/>
</svg>
<div class="abs clk" style="left:2704px;top:1530px;transform:scaleX(0.95)">10:24 AM</div><div class="abs clk" style="left:2699.6px;top:1565px;transform:scaleX(0.973)">9/30/2014</div>
</body></html>
